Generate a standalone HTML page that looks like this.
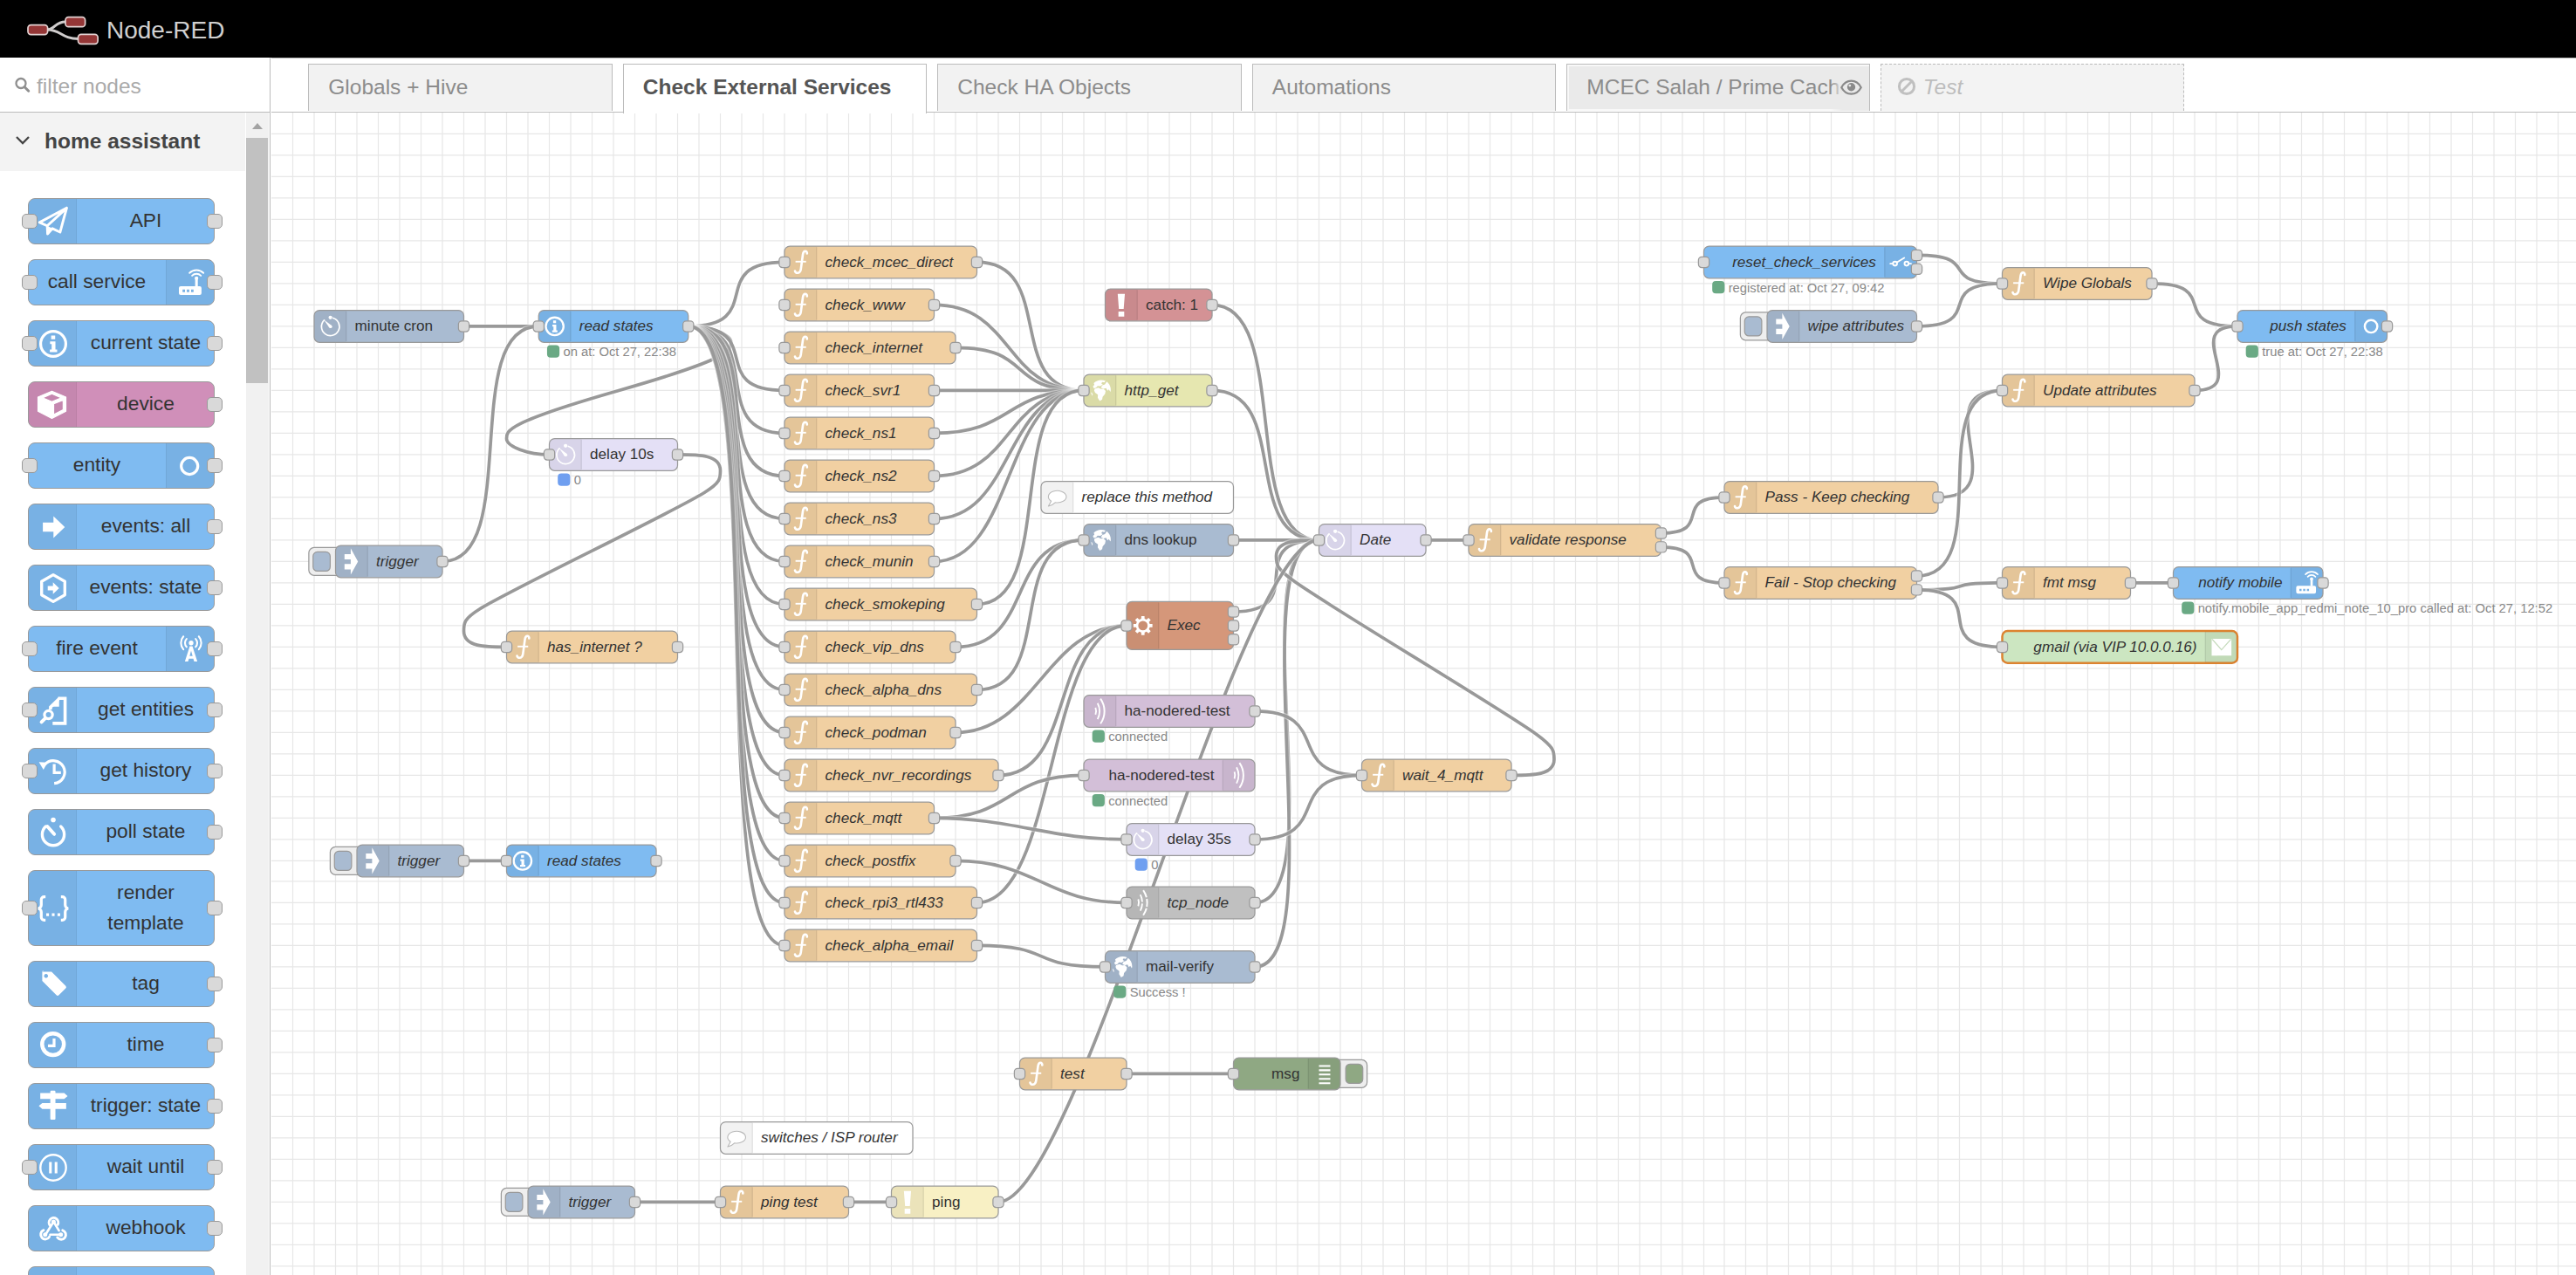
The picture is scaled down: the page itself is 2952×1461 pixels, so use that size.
<!DOCTYPE html>
<html lang="en"><head><meta charset="utf-8"><title>Node-RED</title><style>
html,body{margin:0;padding:0}
body{width:2952px;height:1461px;overflow:hidden;position:relative;background:#fff;font-family:"Liberation Sans", sans-serif;color:#333}
#hdr{position:absolute;left:0;top:0;width:2952px;height:66px;background:#000}
#hdr span{position:absolute;left:122px;top:18.500px;font-size:28px;line-height:32px;color:#cfcfcf}
#pal{position:absolute;left:0;top:66px;width:310px;height:1395px;background:#fff;border-right:1.5px solid #bbb;box-sizing:border-box;overflow:hidden}
#psearch{position:absolute;left:0;top:0;width:310px;height:63px;border-bottom:1.5px solid #bbb;box-sizing:border-box}
#psearch span{position:absolute;left:42px;top:18px;font-size:24.500px;line-height:30px;color:#aaa}
#pcat{position:absolute;left:0;top:63px;width:281px;height:67px;background:#f3f3f3}
#pcat span{position:absolute;left:51px;top:18px;font-size:24.500px;line-height:30px;font-weight:bold;color:#444}
.pn{position:absolute;left:32px;width:212px;border:1px solid #999;border-radius:8px;box-sizing:content-box}
.pi{position:absolute;top:0;bottom:0;width:54px;background:rgba(0,0,0,.05)}
.pi svg{position:absolute;left:6.500px;top:50%;margin-top:-21px}
.pl{font-size:22.750px;line-height:35px;margin-top:7px;margin-bottom:7px;text-align:center;color:#333;white-space:nowrap}
.pp{position:absolute;width:15.500px;height:15.500px;border:1px solid #999;border-radius:5px;background:#d9d9d9}
#sb{position:absolute;left:282px;top:63px;width:26px;height:1332px;background:#f1f1f1}
#sbt{position:absolute;left:0;top:29px;width:25px;height:281px;background:#c1c1c1}
#tabs{position:absolute;left:311px;top:66px;width:2641px;height:61px;background:#fff;border-top:1.5px solid #bbb;border-bottom:1.5px solid #bbb;box-sizing:content-box}
.tab{position:absolute;top:5.800px;width:346.300px;height:53.700px;border:1.500px solid #bbb;border-bottom:none;background:#f2f2f2;font-size:24.500px;line-height:51.400px;color:#8c8c8c;white-space:nowrap;overflow:hidden;box-sizing:content-box}
.tab.act{background:#fff;color:#555;font-weight:bold;height:56px}
.tab.hov{background:#eaeaea;box-shadow:inset 0 0 0 2px #f8f8f8}
.tab.dis{border-style:dashed;border-bottom-style:none;font-style:italic;color:#bdbdbd;background:#f3f3f3}
.tab>span,.tab{padding-left:0}
.tab{text-indent:22px}
.tab span{text-indent:0;display:inline-block}
.fade{position:absolute;right:0;top:2px;bottom:0;width:44px;background:linear-gradient(to right,rgba(234,234,234,0),#eaeaea 30%)}
.p{fill:#d9d9d9;stroke:#999}
.lo{fill:none;stroke:#fff;stroke-opacity:.4;stroke-width:5}
.ll{fill:none;stroke:#999;stroke-width:3}
.st{font-size:12.050px;fill:#888}
</style></head>
<body>
<svg style="position:absolute;left:0;top:0" width="2952" height="1461" viewBox="0 0 2952 1461">
<defs><clipPath id="cc"><rect x="310.2" y="128.9" width="2642" height="1332.1"/></clipPath></defs>
<g clip-path="url(#cc)"><g transform="translate(311,128.9) scale(1.225,1.225)" font-family='&quot;Liberation Sans&quot;, sans-serif' font-size="14" fill="#333">
<path d="M20 0V1088.05M40 0V1088.05M60 0V1088.05M80 0V1088.05M100 0V1088.05M120 0V1088.05M140 0V1088.05M160 0V1088.05M180 0V1088.05M200 0V1088.05M220 0V1088.05M240 0V1088.05M260 0V1088.05M280 0V1088.05M300 0V1088.05M320 0V1088.05M340 0V1088.05M360 0V1088.05M380 0V1088.05M400 0V1088.05M420 0V1088.05M440 0V1088.05M460 0V1088.05M480 0V1088.05M500 0V1088.05M520 0V1088.05M540 0V1088.05M560 0V1088.05M580 0V1088.05M600 0V1088.05M620 0V1088.05M640 0V1088.05M660 0V1088.05M680 0V1088.05M700 0V1088.05M720 0V1088.05M740 0V1088.05M760 0V1088.05M780 0V1088.05M800 0V1088.05M820 0V1088.05M840 0V1088.05M860 0V1088.05M880 0V1088.05M900 0V1088.05M920 0V1088.05M940 0V1088.05M960 0V1088.05M980 0V1088.05M1000 0V1088.05M1020 0V1088.05M1040 0V1088.05M1060 0V1088.05M1080 0V1088.05M1100 0V1088.05M1120 0V1088.05M1140 0V1088.05M1160 0V1088.05M1180 0V1088.05M1200 0V1088.05M1220 0V1088.05M1240 0V1088.05M1260 0V1088.05M1280 0V1088.05M1300 0V1088.05M1320 0V1088.05M1340 0V1088.05M1359.18 0V1088.05M1379.18 0V1088.05M1399.18 0V1088.05M1419.18 0V1088.05M1439.18 0V1088.05M1459.18 0V1088.05M1479.18 0V1088.05M1499.18 0V1088.05M1519.18 0V1088.05M1539.18 0V1088.05M1559.18 0V1088.05M1579.18 0V1088.05M1599.18 0V1088.05M1619.18 0V1088.05M1639.18 0V1088.05M1659.18 0V1088.05M1679.18 0V1088.05M1699.18 0V1088.05M1719.18 0V1088.05M1739.18 0V1088.05M1759.18 0V1088.05M1779.18 0V1088.05M1799.18 0V1088.05M1819.18 0V1088.05M1839.18 0V1088.05M1859.18 0V1088.05M1879.18 0V1088.05M1899.18 0V1088.05M1919.18 0V1088.05M1939.18 0V1088.05M1959.18 0V1088.05M1979.18 0V1088.05M1999.18 0V1088.05M2019.18 0V1088.05M2039.18 0V1088.05M2059.18 0V1088.05M2079.18 0V1088.05M2099.18 0V1088.05M2119.18 0V1088.05M2139.18 0V1088.05M0 20H2157.15M0 40H2157.15M0 60H2157.15M0 80H2157.15M0 100H2157.15M0 120H2157.15M0 140H2157.15M0 160H2157.15M0 180H2157.15M0 200H2157.15M0 220H2157.15M0 240H2157.15M0 260H2157.15M0 280H2157.15M0 300H2157.15M0 320H2157.15M0 340H2157.15M0 360H2157.15M0 380H2157.15M0 400H2157.15M0 420H2157.15M0 440H2157.15M0 460H2157.15M0 480H2157.15M0 500H2157.15M0 520H2157.15M0 540H2157.15M0 560H2157.15M0 580H2157.15M0 600H2157.15M0 620H2157.15M0 640H2157.15M0 660H2157.15M0 680H2157.15M0 700H2157.15M0 719.18H2157.15M0 739.18H2157.15M0 759.18H2157.15M0 779.18H2157.15M0 799.18H2157.15M0 819.18H2157.15M0 839.18H2157.15M0 859.18H2157.15M0 879.18H2157.15M0 899.18H2157.15M0 919.18H2157.15M0 939.18H2157.15M0 959.18H2157.15M0 979.18H2157.15M0 999.18H2157.15M0 1019.18H2157.15M0 1039.18H2157.15M0 1059.18H2157.15M0 1079.18H2157.15" stroke="#e7e7e7" stroke-width="1" fill="none"/>
<path d="M 180 200 C 232.5 200 197.5 200 250 200" class="lo"/><path d="M 180 200 C 232.5 200 197.5 200 250 200" class="ll"/>
<path d="M 160 420 C 235 420 175 200 250 200" class="lo"/><path d="M 160 420 C 235 420 175 200 250 200" class="ll"/>
<path d="M 390 200 C 410 200 430 207.5 430 215 S 430 230 325 260 S 220 297.5 220 305 S 240 320 260 320" class="lo"/><path d="M 390 200 C 410 200 430 207.5 430 215 S 430 230 325 260 S 220 297.5 220 305 S 240 320 260 320" class="ll"/>
<path d="M 390 200 C 465 200 405 140 480 140" class="lo"/><path d="M 390 200 C 465 200 405 140 480 140" class="ll"/>
<path d="M 390 200 C 465 200 405 300 480 300" class="lo"/><path d="M 390 200 C 465 200 405 300 480 300" class="ll"/>
<path d="M 390 200 C 465 200 405 380 480 380" class="lo"/><path d="M 390 200 C 465 200 405 380 480 380" class="ll"/>
<path d="M 390 200 C 465 200 405 460 480 460" class="lo"/><path d="M 390 200 C 465 200 405 460 480 460" class="ll"/>
<path d="M 390 200 C 465 200 405 540 480 540" class="lo"/><path d="M 390 200 C 465 200 405 540 480 540" class="ll"/>
<path d="M 390 200 C 465 200 405 620 480 620" class="lo"/><path d="M 390 200 C 465 200 405 620 480 620" class="ll"/>
<path d="M 390 200 C 465 200 405 700 480 700" class="lo"/><path d="M 390 200 C 465 200 405 700 480 700" class="ll"/>
<path d="M 390 200 C 465 200 405 779.18 480 779.18" class="lo"/><path d="M 390 200 C 465 200 405 779.18 480 779.18" class="ll"/>
<path d="M 390 200 C 465 200 405 260 480 260" class="lo"/><path d="M 390 200 C 465 200 405 260 480 260" class="ll"/>
<path d="M 390 200 C 465 200 405 340 480 340" class="lo"/><path d="M 390 200 C 465 200 405 340 480 340" class="ll"/>
<path d="M 390 200 C 465 200 405 420 480 420" class="lo"/><path d="M 390 200 C 465 200 405 420 480 420" class="ll"/>
<path d="M 390 200 C 465 200 405 500 480 500" class="lo"/><path d="M 390 200 C 465 200 405 500 480 500" class="ll"/>
<path d="M 390 200 C 465 200 405 580 480 580" class="lo"/><path d="M 390 200 C 465 200 405 580 480 580" class="ll"/>
<path d="M 390 200 C 465 200 405 660 480 660" class="lo"/><path d="M 390 200 C 465 200 405 660 480 660" class="ll"/>
<path d="M 390 200 C 465 200 405 739.18 480 739.18" class="lo"/><path d="M 390 200 C 465 200 405 739.18 480 739.18" class="ll"/>
<path d="M 380 320 C 400 320 420 320 420 335 S 420 350 300 410 S 180 470 180 485 S 200 500 220 500" class="lo"/><path d="M 380 320 C 400 320 420 320 420 335 S 420 350 300 410 S 180 470 180 485 S 200 500 220 500" class="ll"/>
<path d="M 660 140 C 735 140 685 260 760 260" class="lo"/><path d="M 660 140 C 735 140 685 260 760 260" class="ll"/>
<path d="M 620 180 C 695 180 685 260 760 260" class="lo"/><path d="M 620 180 C 695 180 685 260 760 260" class="ll"/>
<path d="M 640 220 C 715 220 685 260 760 260" class="lo"/><path d="M 640 220 C 715 220 685 260 760 260" class="ll"/>
<path d="M 620 260 C 695 260 685 260 760 260" class="lo"/><path d="M 620 260 C 695 260 685 260 760 260" class="ll"/>
<path d="M 620 300 C 695 300 685 260 760 260" class="lo"/><path d="M 620 300 C 695 300 685 260 760 260" class="ll"/>
<path d="M 620 340 C 695 340 685 260 760 260" class="lo"/><path d="M 620 340 C 695 340 685 260 760 260" class="ll"/>
<path d="M 620 380 C 695 380 685 260 760 260" class="lo"/><path d="M 620 380 C 695 380 685 260 760 260" class="ll"/>
<path d="M 620 420 C 695 420 685 260 760 260" class="lo"/><path d="M 620 420 C 695 420 685 260 760 260" class="ll"/>
<path d="M 660 460 C 735 460 685 260 760 260" class="lo"/><path d="M 660 460 C 735 460 685 260 760 260" class="ll"/>
<path d="M 640 500 C 715 500 685 400 760 400" class="lo"/><path d="M 640 500 C 715 500 685 400 760 400" class="ll"/>
<path d="M 660 540 C 735 540 685 400 760 400" class="lo"/><path d="M 660 540 C 735 540 685 400 760 400" class="ll"/>
<path d="M 640 580 C 715 580 725 480 800 480" class="lo"/><path d="M 640 580 C 715 580 725 480 800 480" class="ll"/>
<path d="M 680 620 C 755 620 725 480 800 480" class="lo"/><path d="M 680 620 C 755 620 725 480 800 480" class="ll"/>
<path d="M 660 739.18 C 735 739.18 725 480 800 480" class="lo"/><path d="M 660 739.18 C 735 739.18 725 480 800 480" class="ll"/>
<path d="M 620 660 C 695 660 685 620 760 620" class="lo"/><path d="M 620 660 C 695 660 685 620 760 620" class="ll"/>
<path d="M 620 660 C 695 660 725 680 800 680" class="lo"/><path d="M 620 660 C 695 660 725 680 800 680" class="ll"/>
<path d="M 640 700 C 715 700 725 739.18 800 739.18" class="lo"/><path d="M 640 700 C 715 700 725 739.18 800 739.18" class="ll"/>
<path d="M 660 779.18 C 735 779.18 705 799.18 780 799.18" class="lo"/><path d="M 660 779.18 C 735 779.18 705 799.18 780 799.18" class="ll"/>
<path d="M 880 180 C 955 180 905 400 980 400" class="lo"/><path d="M 880 180 C 955 180 905 400 980 400" class="ll"/>
<path d="M 880 260 C 955 260 905 400 980 400" class="lo"/><path d="M 880 260 C 955 260 905 400 980 400" class="ll"/>
<path d="M 900 400 C 960 400 920 400 980 400" class="lo"/><path d="M 900 400 C 960 400 920 400 980 400" class="ll"/>
<path d="M 900 467 C 975 467 905 400 980 400" class="lo"/><path d="M 900 467 C 975 467 905 400 980 400" class="ll"/>
<path d="M 920 739.18 C 995 739.18 905 400 980 400" class="lo"/><path d="M 920 739.18 C 995 739.18 905 400 980 400" class="ll"/>
<path d="M 920 799.18 C 995 799.18 905 400 980 400" class="lo"/><path d="M 920 799.18 C 995 799.18 905 400 980 400" class="ll"/>
<path d="M 1160 620 C 1180 620 1200 620 1200 605 S 1200 590 1070 510 S 940 430 940 415 S 960 400 980 400" class="lo"/><path d="M 1160 620 C 1180 620 1200 620 1200 605 S 1200 590 1070 510 S 940 430 940 415 S 960 400 980 400" class="ll"/>
<path d="M 680 1019.18 C 755 1019.18 905 400 980 400" class="lo"/><path d="M 680 1019.18 C 755 1019.18 905 400 980 400" class="ll"/>
<path d="M 920 560 C 995 560 945 620 1020 620" class="lo"/><path d="M 920 560 C 995 560 945 620 1020 620" class="ll"/>
<path d="M 920 680 C 995 680 945 620 1020 620" class="lo"/><path d="M 920 680 C 995 680 945 620 1020 620" class="ll"/>
<path d="M 1080 400 C 1110 400 1090 400 1120 400" class="lo"/><path d="M 1080 400 C 1110 400 1090 400 1120 400" class="ll"/>
<path d="M 1300 393.5 C 1350.72 393.5 1308.46 360 1359.18 360" class="lo"/><path d="M 1300 393.5 C 1350.72 393.5 1308.46 360 1359.18 360" class="ll"/>
<path d="M 1300 406.5 C 1350.72 406.5 1308.46 440 1359.18 440" class="lo"/><path d="M 1300 406.5 C 1350.72 406.5 1308.46 440 1359.18 440" class="ll"/>
<path d="M 1559.18 360 C 1634.18 360 1544.18 260 1619.18 260" class="lo"/><path d="M 1559.18 360 C 1634.18 360 1544.18 260 1619.18 260" class="ll"/>
<path d="M 1539.18 433.5 C 1614.18 433.5 1544.18 260 1619.18 260" class="lo"/><path d="M 1539.18 433.5 C 1614.18 433.5 1544.18 260 1619.18 260" class="ll"/>
<path d="M 1539.18 446.5 C 1599.38 446.5 1558.99 440 1619.18 440" class="lo"/><path d="M 1539.18 446.5 C 1599.38 446.5 1558.99 440 1619.18 440" class="ll"/>
<path d="M 1539.18 446.5 C 1611.36 446.5 1547 500 1619.18 500" class="lo"/><path d="M 1539.18 446.5 C 1611.36 446.5 1547 500 1619.18 500" class="ll"/>
<path d="M 1739.18 440 C 1769.18 440 1749.18 440 1779.18 440" class="lo"/><path d="M 1739.18 440 C 1769.18 440 1749.18 440 1779.18 440" class="ll"/>
<path d="M 1539.18 133.5 C 1602.39 133.5 1555.98 160 1619.18 160" class="lo"/><path d="M 1539.18 133.5 C 1602.39 133.5 1555.98 160 1619.18 160" class="ll"/>
<path d="M 1539.18 200 C 1606.27 200 1552.1 160 1619.18 160" class="lo"/><path d="M 1539.18 200 C 1606.27 200 1552.1 160 1619.18 160" class="ll"/>
<path d="M 1759.18 160 C 1826.27 160 1772.1 200 1839.18 200" class="lo"/><path d="M 1759.18 160 C 1826.27 160 1772.1 200 1839.18 200" class="ll"/>
<path d="M 1799.18 260 C 1853.27 260 1785.1 200 1839.18 200" class="lo"/><path d="M 1799.18 260 C 1853.27 260 1785.1 200 1839.18 200" class="ll"/>
<path d="M 180 700 C 210 700 190 700 220 700" class="lo"/><path d="M 180 700 C 210 700 190 700 220 700" class="ll"/>
<path d="M 340 1019.18 C 400 1019.18 360 1019.18 420 1019.18" class="lo"/><path d="M 340 1019.18 C 400 1019.18 360 1019.18 420 1019.18" class="ll"/>
<path d="M 540 1019.18 C 570 1019.18 550 1019.18 580 1019.18" class="lo"/><path d="M 540 1019.18 C 570 1019.18 550 1019.18 580 1019.18" class="ll"/>
<path d="M 800 899.18 C 875 899.18 825 899.18 900 899.18" class="lo"/><path d="M 800 899.18 C 875 899.18 825 899.18 900 899.18" class="ll"/>
<g transform="translate(40,185)"><rect width="140" height="30" rx="5" fill="#a9bbd1" stroke="#999"/><path d="M5 .5 h25 v29 h-25 a4.5 4.5 0 0 1 -4.5 -4.5 v-20 a4.5 4.5 0 0 1 4.5 -4.5z" fill="#000" fill-opacity=".05"/><path d="M30 1v28" stroke="#000" stroke-opacity=".1" fill="none"/><g transform="translate(0,0)"><path d="M17.800 7.300A8.400 8.400 0 1 1 9.400 9.300" fill="none" stroke="#fff" stroke-width="1.400" stroke-linecap="round"/><circle cx="15.300" cy="15.300" r="1.500" fill="#fff"/><circle cx="15.200" cy="6.800" r="1.750" fill="#fff"/><path d="M14.100 16.200L9 8.700l7.300 5.600z" fill="#fff"/></g><text x="38" y="19.3">minute cron</text><rect class="p" x="135" y="10" width="10" height="10" rx="3"/></g>
<g transform="translate(250,185)"><rect width="140" height="30" rx="5" fill="#7fbbf1" stroke="#999"/><path d="M5 .5 h25 v29 h-25 a4.5 4.5 0 0 1 -4.5 -4.5 v-20 a4.5 4.5 0 0 1 4.5 -4.5z" fill="#000" fill-opacity=".05"/><path d="M30 1v28" stroke="#000" stroke-opacity=".1" fill="none"/><g transform="translate(0,0)"><circle cx="15" cy="15" r="8.300" fill="none" stroke="#fff" stroke-width="1.900"/><path d="M13.600 9.600h2.700v2.500h-2.700zM12.900 13.500h3.600v5.300h1.100v1.700h-4.900v-1.700h1.200v-3.600h-1z" fill="#fff"/></g><text x="38" y="19.3" font-style="italic">read states</text><rect class="p" x="-5" y="10" width="10" height="10" rx="3"/><rect class="p" x="135" y="10" width="10" height="10" rx="3"/><rect x="9.200" y="33.9" width="9" height="9" rx="2" fill="#6aa984" stroke="#6aa984" stroke-width="2.600"/><text class="st" x="23" y="43">on at: Oct 27, 22:38</text></g>
<g transform="translate(480,125)"><rect width="180" height="30" rx="5" fill="#f1d0a2" stroke="#999"/><path d="M5 .5 h25 v29 h-25 a4.5 4.5 0 0 1 -4.5 -4.5 v-20 a4.5 4.5 0 0 1 4.5 -4.5z" fill="#000" fill-opacity=".05"/><path d="M30 1v28" stroke="#000" stroke-opacity=".1" fill="none"/><g transform="translate(0,0)"><g fill="none" stroke="#fff" stroke-linecap="round"><path d="M21.100 6.900C21.300 4.100 17.800 3.500 17.200 7.700L15.300 21.700C14.700 25.900 10.200 25.900 9.800 23.300" stroke-width="2.150"/><path d="M10.300 14.500H20.200" stroke-width="1.550" stroke-linecap="butt"/></g></g><text x="38" y="19.3" font-style="italic">check_mcec_direct</text><rect class="p" x="-5" y="10" width="10" height="10" rx="3"/><rect class="p" x="175" y="10" width="10" height="10" rx="3"/></g>
<g transform="translate(480,165)"><rect width="140" height="30" rx="5" fill="#f1d0a2" stroke="#999"/><path d="M5 .5 h25 v29 h-25 a4.5 4.5 0 0 1 -4.5 -4.5 v-20 a4.5 4.5 0 0 1 4.5 -4.5z" fill="#000" fill-opacity=".05"/><path d="M30 1v28" stroke="#000" stroke-opacity=".1" fill="none"/><g transform="translate(0,0)"><g fill="none" stroke="#fff" stroke-linecap="round"><path d="M21.100 6.900C21.300 4.100 17.800 3.500 17.200 7.700L15.300 21.700C14.700 25.900 10.200 25.900 9.800 23.300" stroke-width="2.150"/><path d="M10.300 14.500H20.200" stroke-width="1.550" stroke-linecap="butt"/></g></g><text x="38" y="19.3" font-style="italic">check_www</text><rect class="p" x="-5" y="10" width="10" height="10" rx="3"/><rect class="p" x="135" y="10" width="10" height="10" rx="3"/></g>
<g transform="translate(480,205)"><rect width="160" height="30" rx="5" fill="#f1d0a2" stroke="#999"/><path d="M5 .5 h25 v29 h-25 a4.5 4.5 0 0 1 -4.5 -4.5 v-20 a4.5 4.5 0 0 1 4.5 -4.5z" fill="#000" fill-opacity=".05"/><path d="M30 1v28" stroke="#000" stroke-opacity=".1" fill="none"/><g transform="translate(0,0)"><g fill="none" stroke="#fff" stroke-linecap="round"><path d="M21.100 6.900C21.300 4.100 17.800 3.500 17.200 7.700L15.300 21.700C14.700 25.900 10.200 25.900 9.800 23.300" stroke-width="2.150"/><path d="M10.300 14.500H20.200" stroke-width="1.550" stroke-linecap="butt"/></g></g><text x="38" y="19.3" font-style="italic">check_internet</text><rect class="p" x="-5" y="10" width="10" height="10" rx="3"/><rect class="p" x="155" y="10" width="10" height="10" rx="3"/></g>
<g transform="translate(480,245)"><rect width="140" height="30" rx="5" fill="#f1d0a2" stroke="#999"/><path d="M5 .5 h25 v29 h-25 a4.5 4.5 0 0 1 -4.5 -4.5 v-20 a4.5 4.5 0 0 1 4.5 -4.5z" fill="#000" fill-opacity=".05"/><path d="M30 1v28" stroke="#000" stroke-opacity=".1" fill="none"/><g transform="translate(0,0)"><g fill="none" stroke="#fff" stroke-linecap="round"><path d="M21.100 6.900C21.300 4.100 17.800 3.500 17.200 7.700L15.300 21.700C14.700 25.900 10.200 25.900 9.800 23.300" stroke-width="2.150"/><path d="M10.300 14.500H20.200" stroke-width="1.550" stroke-linecap="butt"/></g></g><text x="38" y="19.3" font-style="italic">check_svr1</text><rect class="p" x="-5" y="10" width="10" height="10" rx="3"/><rect class="p" x="135" y="10" width="10" height="10" rx="3"/></g>
<g transform="translate(480,285)"><rect width="140" height="30" rx="5" fill="#f1d0a2" stroke="#999"/><path d="M5 .5 h25 v29 h-25 a4.5 4.5 0 0 1 -4.5 -4.5 v-20 a4.5 4.5 0 0 1 4.5 -4.5z" fill="#000" fill-opacity=".05"/><path d="M30 1v28" stroke="#000" stroke-opacity=".1" fill="none"/><g transform="translate(0,0)"><g fill="none" stroke="#fff" stroke-linecap="round"><path d="M21.100 6.900C21.300 4.100 17.800 3.500 17.200 7.700L15.300 21.700C14.700 25.900 10.200 25.900 9.800 23.300" stroke-width="2.150"/><path d="M10.300 14.500H20.200" stroke-width="1.550" stroke-linecap="butt"/></g></g><text x="38" y="19.3" font-style="italic">check_ns1</text><rect class="p" x="-5" y="10" width="10" height="10" rx="3"/><rect class="p" x="135" y="10" width="10" height="10" rx="3"/></g>
<g transform="translate(480,325)"><rect width="140" height="30" rx="5" fill="#f1d0a2" stroke="#999"/><path d="M5 .5 h25 v29 h-25 a4.5 4.5 0 0 1 -4.5 -4.5 v-20 a4.5 4.5 0 0 1 4.5 -4.5z" fill="#000" fill-opacity=".05"/><path d="M30 1v28" stroke="#000" stroke-opacity=".1" fill="none"/><g transform="translate(0,0)"><g fill="none" stroke="#fff" stroke-linecap="round"><path d="M21.100 6.900C21.300 4.100 17.800 3.500 17.200 7.700L15.300 21.700C14.700 25.900 10.200 25.900 9.800 23.300" stroke-width="2.150"/><path d="M10.300 14.500H20.200" stroke-width="1.550" stroke-linecap="butt"/></g></g><text x="38" y="19.3" font-style="italic">check_ns2</text><rect class="p" x="-5" y="10" width="10" height="10" rx="3"/><rect class="p" x="135" y="10" width="10" height="10" rx="3"/></g>
<g transform="translate(480,365)"><rect width="140" height="30" rx="5" fill="#f1d0a2" stroke="#999"/><path d="M5 .5 h25 v29 h-25 a4.5 4.5 0 0 1 -4.5 -4.5 v-20 a4.5 4.5 0 0 1 4.5 -4.5z" fill="#000" fill-opacity=".05"/><path d="M30 1v28" stroke="#000" stroke-opacity=".1" fill="none"/><g transform="translate(0,0)"><g fill="none" stroke="#fff" stroke-linecap="round"><path d="M21.100 6.900C21.300 4.100 17.800 3.500 17.200 7.700L15.300 21.700C14.700 25.900 10.200 25.900 9.800 23.300" stroke-width="2.150"/><path d="M10.300 14.500H20.200" stroke-width="1.550" stroke-linecap="butt"/></g></g><text x="38" y="19.3" font-style="italic">check_ns3</text><rect class="p" x="-5" y="10" width="10" height="10" rx="3"/><rect class="p" x="135" y="10" width="10" height="10" rx="3"/></g>
<g transform="translate(480,405)"><rect width="140" height="30" rx="5" fill="#f1d0a2" stroke="#999"/><path d="M5 .5 h25 v29 h-25 a4.5 4.5 0 0 1 -4.5 -4.5 v-20 a4.5 4.5 0 0 1 4.5 -4.5z" fill="#000" fill-opacity=".05"/><path d="M30 1v28" stroke="#000" stroke-opacity=".1" fill="none"/><g transform="translate(0,0)"><g fill="none" stroke="#fff" stroke-linecap="round"><path d="M21.100 6.900C21.300 4.100 17.800 3.500 17.200 7.700L15.300 21.700C14.700 25.900 10.200 25.900 9.800 23.300" stroke-width="2.150"/><path d="M10.300 14.500H20.200" stroke-width="1.550" stroke-linecap="butt"/></g></g><text x="38" y="19.3" font-style="italic">check_munin</text><rect class="p" x="-5" y="10" width="10" height="10" rx="3"/><rect class="p" x="135" y="10" width="10" height="10" rx="3"/></g>
<g transform="translate(480,445)"><rect width="180" height="30" rx="5" fill="#f1d0a2" stroke="#999"/><path d="M5 .5 h25 v29 h-25 a4.5 4.5 0 0 1 -4.5 -4.5 v-20 a4.5 4.5 0 0 1 4.5 -4.5z" fill="#000" fill-opacity=".05"/><path d="M30 1v28" stroke="#000" stroke-opacity=".1" fill="none"/><g transform="translate(0,0)"><g fill="none" stroke="#fff" stroke-linecap="round"><path d="M21.100 6.900C21.300 4.100 17.800 3.500 17.200 7.700L15.300 21.700C14.700 25.900 10.200 25.900 9.800 23.300" stroke-width="2.150"/><path d="M10.300 14.500H20.200" stroke-width="1.550" stroke-linecap="butt"/></g></g><text x="38" y="19.3" font-style="italic">check_smokeping</text><rect class="p" x="-5" y="10" width="10" height="10" rx="3"/><rect class="p" x="175" y="10" width="10" height="10" rx="3"/></g>
<g transform="translate(480,485)"><rect width="160" height="30" rx="5" fill="#f1d0a2" stroke="#999"/><path d="M5 .5 h25 v29 h-25 a4.5 4.5 0 0 1 -4.5 -4.5 v-20 a4.5 4.5 0 0 1 4.5 -4.5z" fill="#000" fill-opacity=".05"/><path d="M30 1v28" stroke="#000" stroke-opacity=".1" fill="none"/><g transform="translate(0,0)"><g fill="none" stroke="#fff" stroke-linecap="round"><path d="M21.100 6.900C21.300 4.100 17.800 3.500 17.200 7.700L15.300 21.700C14.700 25.900 10.200 25.900 9.800 23.300" stroke-width="2.150"/><path d="M10.300 14.500H20.200" stroke-width="1.550" stroke-linecap="butt"/></g></g><text x="38" y="19.3" font-style="italic">check_vip_dns</text><rect class="p" x="-5" y="10" width="10" height="10" rx="3"/><rect class="p" x="155" y="10" width="10" height="10" rx="3"/></g>
<g transform="translate(480,525)"><rect width="180" height="30" rx="5" fill="#f1d0a2" stroke="#999"/><path d="M5 .5 h25 v29 h-25 a4.5 4.5 0 0 1 -4.5 -4.5 v-20 a4.5 4.5 0 0 1 4.5 -4.5z" fill="#000" fill-opacity=".05"/><path d="M30 1v28" stroke="#000" stroke-opacity=".1" fill="none"/><g transform="translate(0,0)"><g fill="none" stroke="#fff" stroke-linecap="round"><path d="M21.100 6.900C21.300 4.100 17.800 3.500 17.200 7.700L15.300 21.700C14.700 25.900 10.200 25.900 9.800 23.300" stroke-width="2.150"/><path d="M10.300 14.500H20.200" stroke-width="1.550" stroke-linecap="butt"/></g></g><text x="38" y="19.3" font-style="italic">check_alpha_dns</text><rect class="p" x="-5" y="10" width="10" height="10" rx="3"/><rect class="p" x="175" y="10" width="10" height="10" rx="3"/></g>
<g transform="translate(480,565)"><rect width="160" height="30" rx="5" fill="#f1d0a2" stroke="#999"/><path d="M5 .5 h25 v29 h-25 a4.5 4.5 0 0 1 -4.5 -4.5 v-20 a4.5 4.5 0 0 1 4.5 -4.5z" fill="#000" fill-opacity=".05"/><path d="M30 1v28" stroke="#000" stroke-opacity=".1" fill="none"/><g transform="translate(0,0)"><g fill="none" stroke="#fff" stroke-linecap="round"><path d="M21.100 6.900C21.300 4.100 17.800 3.500 17.200 7.700L15.300 21.700C14.700 25.900 10.200 25.900 9.800 23.300" stroke-width="2.150"/><path d="M10.300 14.500H20.200" stroke-width="1.550" stroke-linecap="butt"/></g></g><text x="38" y="19.3" font-style="italic">check_podman</text><rect class="p" x="-5" y="10" width="10" height="10" rx="3"/><rect class="p" x="155" y="10" width="10" height="10" rx="3"/></g>
<g transform="translate(480,605)"><rect width="200" height="30" rx="5" fill="#f1d0a2" stroke="#999"/><path d="M5 .5 h25 v29 h-25 a4.5 4.5 0 0 1 -4.5 -4.5 v-20 a4.5 4.5 0 0 1 4.5 -4.5z" fill="#000" fill-opacity=".05"/><path d="M30 1v28" stroke="#000" stroke-opacity=".1" fill="none"/><g transform="translate(0,0)"><g fill="none" stroke="#fff" stroke-linecap="round"><path d="M21.100 6.900C21.300 4.100 17.800 3.500 17.200 7.700L15.300 21.700C14.700 25.900 10.200 25.900 9.800 23.300" stroke-width="2.150"/><path d="M10.300 14.500H20.200" stroke-width="1.550" stroke-linecap="butt"/></g></g><text x="38" y="19.3" font-style="italic">check_nvr_recordings</text><rect class="p" x="-5" y="10" width="10" height="10" rx="3"/><rect class="p" x="195" y="10" width="10" height="10" rx="3"/></g>
<g transform="translate(480,645)"><rect width="140" height="30" rx="5" fill="#f1d0a2" stroke="#999"/><path d="M5 .5 h25 v29 h-25 a4.5 4.5 0 0 1 -4.5 -4.5 v-20 a4.5 4.5 0 0 1 4.5 -4.5z" fill="#000" fill-opacity=".05"/><path d="M30 1v28" stroke="#000" stroke-opacity=".1" fill="none"/><g transform="translate(0,0)"><g fill="none" stroke="#fff" stroke-linecap="round"><path d="M21.100 6.900C21.300 4.100 17.800 3.500 17.200 7.700L15.300 21.700C14.700 25.900 10.200 25.900 9.800 23.300" stroke-width="2.150"/><path d="M10.300 14.500H20.200" stroke-width="1.550" stroke-linecap="butt"/></g></g><text x="38" y="19.3" font-style="italic">check_mqtt</text><rect class="p" x="-5" y="10" width="10" height="10" rx="3"/><rect class="p" x="135" y="10" width="10" height="10" rx="3"/></g>
<g transform="translate(480,685)"><rect width="160" height="30" rx="5" fill="#f1d0a2" stroke="#999"/><path d="M5 .5 h25 v29 h-25 a4.5 4.5 0 0 1 -4.5 -4.5 v-20 a4.5 4.5 0 0 1 4.5 -4.5z" fill="#000" fill-opacity=".05"/><path d="M30 1v28" stroke="#000" stroke-opacity=".1" fill="none"/><g transform="translate(0,0)"><g fill="none" stroke="#fff" stroke-linecap="round"><path d="M21.100 6.900C21.300 4.100 17.800 3.500 17.200 7.700L15.300 21.700C14.700 25.900 10.200 25.900 9.800 23.300" stroke-width="2.150"/><path d="M10.300 14.500H20.200" stroke-width="1.550" stroke-linecap="butt"/></g></g><text x="38" y="19.3" font-style="italic">check_postfix</text><rect class="p" x="-5" y="10" width="10" height="10" rx="3"/><rect class="p" x="155" y="10" width="10" height="10" rx="3"/></g>
<g transform="translate(480,724.18)"><rect width="180" height="30" rx="5" fill="#f1d0a2" stroke="#999"/><path d="M5 .5 h25 v29 h-25 a4.5 4.5 0 0 1 -4.5 -4.5 v-20 a4.5 4.5 0 0 1 4.5 -4.5z" fill="#000" fill-opacity=".05"/><path d="M30 1v28" stroke="#000" stroke-opacity=".1" fill="none"/><g transform="translate(0,0)"><g fill="none" stroke="#fff" stroke-linecap="round"><path d="M21.100 6.900C21.300 4.100 17.800 3.500 17.200 7.700L15.300 21.700C14.700 25.900 10.200 25.900 9.800 23.300" stroke-width="2.150"/><path d="M10.300 14.500H20.200" stroke-width="1.550" stroke-linecap="butt"/></g></g><text x="38" y="19.3" font-style="italic">check_rpi3_rtl433</text><rect class="p" x="-5" y="10" width="10" height="10" rx="3"/><rect class="p" x="175" y="10" width="10" height="10" rx="3"/></g>
<g transform="translate(480,764.18)"><rect width="180" height="30" rx="5" fill="#f1d0a2" stroke="#999"/><path d="M5 .5 h25 v29 h-25 a4.5 4.5 0 0 1 -4.5 -4.5 v-20 a4.5 4.5 0 0 1 4.5 -4.5z" fill="#000" fill-opacity=".05"/><path d="M30 1v28" stroke="#000" stroke-opacity=".1" fill="none"/><g transform="translate(0,0)"><g fill="none" stroke="#fff" stroke-linecap="round"><path d="M21.100 6.900C21.300 4.100 17.800 3.500 17.200 7.700L15.300 21.700C14.700 25.900 10.200 25.900 9.800 23.300" stroke-width="2.150"/><path d="M10.300 14.500H20.200" stroke-width="1.550" stroke-linecap="butt"/></g></g><text x="38" y="19.3" font-style="italic">check_alpha_email</text><rect class="p" x="-5" y="10" width="10" height="10" rx="3"/><rect class="p" x="175" y="10" width="10" height="10" rx="3"/></g>
<g transform="translate(260,305)"><rect width="120" height="30" rx="5" fill="#e4e0f6" stroke="#999"/><path d="M5 .5 h25 v29 h-25 a4.5 4.5 0 0 1 -4.5 -4.5 v-20 a4.5 4.5 0 0 1 4.5 -4.5z" fill="#000" fill-opacity=".05"/><path d="M30 1v28" stroke="#000" stroke-opacity=".1" fill="none"/><g transform="translate(0,0)"><path d="M17.800 7.300A8.400 8.400 0 1 1 9.400 9.300" fill="none" stroke="#fff" stroke-width="1.400" stroke-linecap="round"/><circle cx="15.300" cy="15.300" r="1.500" fill="#fff"/><circle cx="15.200" cy="6.800" r="1.750" fill="#fff"/><path d="M14.100 16.200L9 8.700l7.300 5.600z" fill="#fff"/></g><text x="38" y="19.3">delay 10s</text><rect class="p" x="-5" y="10" width="10" height="10" rx="3"/><rect class="p" x="115" y="10" width="10" height="10" rx="3"/><rect x="9.200" y="33.9" width="9" height="9" rx="2" fill="#6f9ff0" stroke="#6f9ff0" stroke-width="2.600"/><text class="st" x="23" y="43">0</text></g>
<g transform="translate(60,405)"><rect x="-25" y="2" width="32" height="26" rx="5" fill="#eee" stroke="#999"/><rect x="-21" y="6" width="16" height="18" rx="4" fill="#a9bbd1" stroke="#999"/><rect width="100" height="30" rx="5" fill="#a9bbd1" stroke="#999"/><path d="M5 .5 h25 v29 h-25 a4.5 4.5 0 0 1 -4.5 -4.5 v-20 a4.5 4.5 0 0 1 4.5 -4.5z" fill="#000" fill-opacity=".05"/><path d="M30 1v28" stroke="#000" stroke-opacity=".1" fill="none"/><g transform="translate(0,0)"><path d="M8.400 8.100h6.200v5h-6.200zM8.400 17.400h6.200v5h-6.200zM14.200 2.700l6.800 12.300-6.800 12.300z" fill="#fff"/></g><text x="38" y="19.3" font-style="italic">trigger</text><rect class="p" x="95" y="10" width="10" height="10" rx="3"/></g>
<g transform="translate(220,485)"><rect width="160" height="30" rx="5" fill="#f1d0a2" stroke="#999"/><path d="M5 .5 h25 v29 h-25 a4.5 4.5 0 0 1 -4.5 -4.5 v-20 a4.5 4.5 0 0 1 4.5 -4.5z" fill="#000" fill-opacity=".05"/><path d="M30 1v28" stroke="#000" stroke-opacity=".1" fill="none"/><g transform="translate(0,0)"><g fill="none" stroke="#fff" stroke-linecap="round"><path d="M21.100 6.900C21.300 4.100 17.800 3.500 17.200 7.700L15.300 21.700C14.700 25.900 10.200 25.900 9.800 23.300" stroke-width="2.150"/><path d="M10.300 14.500H20.200" stroke-width="1.550" stroke-linecap="butt"/></g></g><text x="38" y="19.3" font-style="italic">has_internet ?</text><rect class="p" x="-5" y="10" width="10" height="10" rx="3"/><rect class="p" x="155" y="10" width="10" height="10" rx="3"/></g>
<g transform="translate(780,165)"><rect width="100" height="30" rx="5" fill="#d49295" stroke="#999"/><path d="M5 .5 h25 v29 h-25 a4.5 4.5 0 0 1 -4.5 -4.5 v-20 a4.5 4.5 0 0 1 4.5 -4.5z" fill="#000" fill-opacity=".05"/><path d="M30 1v28" stroke="#000" stroke-opacity=".1" fill="none"/><g transform="translate(0,0)"><path d="M11.700 4.600h6.700l-1.100 14.200h-4.500zM12.400 21.300h5.400v4.700h-5.400z" fill="#fff"/></g><text x="38" y="19.3">catch: 1</text><rect class="p" x="95" y="10" width="10" height="10" rx="3"/></g>
<g transform="translate(760,245)"><rect width="120" height="30" rx="5" fill="#e6e7b0" stroke="#999"/><path d="M5 .5 h25 v29 h-25 a4.5 4.5 0 0 1 -4.5 -4.5 v-20 a4.5 4.5 0 0 1 4.5 -4.5z" fill="#000" fill-opacity=".05"/><path d="M30 1v28" stroke="#000" stroke-opacity=".1" fill="none"/><g transform="translate(0,0)"><g fill="#fff"><path d="M9.300 8.200c1.800-1.900 4.300-3 6.900-3 1.500 0 2.900.400 4.200 1l-1.300 1.300-1.900-.300-.800 1.300 1.400.900-2.300 1.700-2.600-.400-1.400 1.800-2.100.500-.900-1.700 1.400-1.600z"/><path d="M21.400 6.800c2.300 1.700 3.800 4.400 3.800 7.400 0 .800-.100 1.500-.300 2.200l-1.500-2.300-1.200 1.200-1.300-2.500-2.400.600-2.500-.900 1.300-2.300 2.500-.900z"/><path d="M10.200 13.400l3.300-.900 2.600 1.100 2.300-.200 2 2.100-.600 2.900-2.200 2.500-.400 2.600-2.300 1.300-1.900-2.900.200-3-2.600-1.700-.900-2.200z"/><path d="M7.300 16.600l1.100 2.100-.500 1.500c-.500-.900-.800-1.900-1-2.900z" opacity=".9"/></g></g><text x="38" y="19.3" font-style="italic">http_get</text><rect class="p" x="-5" y="10" width="10" height="10" rx="3"/><rect class="p" x="115" y="10" width="10" height="10" rx="3"/></g>
<g transform="translate(720,345)"><rect width="180" height="30" rx="5" fill="#ffffff" stroke="#999"/><path d="M5 .5 h25 v29 h-25 a4.5 4.5 0 0 1 -4.5 -4.5 v-20 a4.5 4.5 0 0 1 4.5 -4.5z" fill="#000" fill-opacity=".05"/><path d="M30 1v28" stroke="#000" stroke-opacity=".1" fill="none"/><g transform="translate(0,0)"><path d="M9.500 18.500L6.900 23.200Q10.800 22.400 13.200 19.840A8.400 5.600 0 1 0 9.500 18.500z" fill="#fff" stroke="#b9b9b9" stroke-width=".9" stroke-linejoin="round"/></g><text x="38" y="19.3" font-style="italic">replace this method</text></g>
<g transform="translate(760,385)"><rect width="140" height="30" rx="5" fill="#a9bbd1" stroke="#999"/><path d="M5 .5 h25 v29 h-25 a4.5 4.5 0 0 1 -4.5 -4.5 v-20 a4.5 4.5 0 0 1 4.5 -4.5z" fill="#000" fill-opacity=".05"/><path d="M30 1v28" stroke="#000" stroke-opacity=".1" fill="none"/><g transform="translate(0,0)"><g fill="#fff"><path d="M9.300 8.200c1.800-1.900 4.300-3 6.900-3 1.500 0 2.900.400 4.200 1l-1.300 1.300-1.900-.300-.800 1.300 1.400.900-2.300 1.700-2.600-.400-1.400 1.800-2.100.500-.900-1.700 1.400-1.600z"/><path d="M21.400 6.800c2.300 1.700 3.800 4.400 3.800 7.400 0 .800-.100 1.500-.300 2.200l-1.500-2.300-1.200 1.200-1.300-2.500-2.400.600-2.500-.900 1.300-2.300 2.500-.900z"/><path d="M10.200 13.400l3.300-.900 2.600 1.100 2.300-.200 2 2.100-.600 2.900-2.200 2.500-.400 2.600-2.300 1.300-1.900-2.900.200-3-2.600-1.700-.900-2.200z"/><path d="M7.300 16.600l1.100 2.100-.500 1.500c-.500-.900-.800-1.900-1-2.900z" opacity=".9"/></g></g><text x="38" y="19.3">dns lookup</text><rect class="p" x="-5" y="10" width="10" height="10" rx="3"/><rect class="p" x="135" y="10" width="10" height="10" rx="3"/></g>
<g transform="translate(800,457.5)"><rect width="100" height="45" rx="5" fill="#d5977a" stroke="#999"/><path d="M5 .5 h25 v44 h-25 a4.5 4.5 0 0 1 -4.5 -4.5 v-35 a4.5 4.5 0 0 1 4.5 -4.5z" fill="#000" fill-opacity=".05"/><path d="M30 1v43" stroke="#000" stroke-opacity=".1" fill="none"/><g transform="translate(0,7.5)"><path d="M13.71 8.59L13.82 6.12L16.78 6.12L16.89 8.59L18.70 9.35L20.53 7.68L22.62 9.77L20.95 11.60L21.71 13.41L24.18 13.52L24.18 16.48L21.71 16.59L20.95 18.40L22.62 20.23L20.53 22.32L18.70 20.65L16.89 21.41L16.78 23.88L13.82 23.88L13.71 21.41L11.90 20.65L10.07 22.32L7.98 20.23L9.65 18.40L8.89 16.59L6.42 16.48L6.42 13.52L8.89 13.41L9.65 11.60L7.98 9.77L10.07 7.68L11.90 9.35zM10.90 15.00 a4.40 4.40 0 1 0 8.80 0 a4.40 4.40 0 1 0 -8.80 0z" fill="#fff" fill-rule="evenodd"/></g><text x="38" y="26.8" font-style="italic">Exec</text><rect class="p" x="-5" y="17.5" width="10" height="10" rx="3"/><rect class="p" x="95" y="4.5" width="10" height="10" rx="3"/><rect class="p" x="95" y="17.5" width="10" height="10" rx="3"/><rect class="p" x="95" y="30.5" width="10" height="10" rx="3"/></g>
<g transform="translate(760,545)"><rect width="160" height="30" rx="5" fill="#d3bfd8" stroke="#999"/><path d="M5 .5 h25 v29 h-25 a4.5 4.5 0 0 1 -4.5 -4.5 v-20 a4.5 4.5 0 0 1 4.5 -4.5z" fill="#000" fill-opacity=".05"/><path d="M30 1v28" stroke="#000" stroke-opacity=".1" fill="none"/><g transform="translate(0,0)"><g fill="none" stroke="#fff" stroke-linecap="butt"><path d="M10.90 11.70A9.38 9.38 0 0 1 10.90 18.30" stroke-width="1.5"/><path d="M12.90 7.50A16.53 16.53 0 0 1 12.90 22.50" stroke-width="1.5"/><path d="M15.60 3.30A20.35 20.35 0 0 1 15.60 26.70" stroke-width="1.6"/></g></g><text x="38" y="19.3">ha-nodered-test</text><rect class="p" x="155" y="10" width="10" height="10" rx="3"/><rect x="9.200" y="33.9" width="9" height="9" rx="2" fill="#6aa984" stroke="#6aa984" stroke-width="2.600"/><text class="st" x="23" y="43">connected</text></g>
<g transform="translate(760,605)"><rect width="160" height="30" rx="5" fill="#d3bfd8" stroke="#999"/><path d="M155 .5 h-25 v29 h25 a4.5 4.5 0 0 0 4.5 -4.5 v-20 a4.5 4.5 0 0 0 -4.5 -4.5z" fill="#000" fill-opacity=".05"/><path d="M130 1v28" stroke="#000" stroke-opacity=".1" fill="none"/><g transform="translate(130,0)"><g fill="none" stroke="#fff" stroke-linecap="butt"><path d="M10.90 11.70A9.38 9.38 0 0 1 10.90 18.30" stroke-width="1.5"/><path d="M12.90 7.50A16.53 16.53 0 0 1 12.90 22.50" stroke-width="1.5"/><path d="M15.60 3.30A20.35 20.35 0 0 1 15.60 26.70" stroke-width="1.6"/></g></g><text x="122" y="19.3" text-anchor="end">ha-nodered-test</text><rect class="p" x="-5" y="10" width="10" height="10" rx="3"/><rect x="9.200" y="33.9" width="9" height="9" rx="2" fill="#6aa984" stroke="#6aa984" stroke-width="2.600"/><text class="st" x="23" y="43">connected</text></g>
<g transform="translate(800,665)"><rect width="120" height="30" rx="5" fill="#e4e0f6" stroke="#999"/><path d="M5 .5 h25 v29 h-25 a4.5 4.5 0 0 1 -4.5 -4.5 v-20 a4.5 4.5 0 0 1 4.5 -4.5z" fill="#000" fill-opacity=".05"/><path d="M30 1v28" stroke="#000" stroke-opacity=".1" fill="none"/><g transform="translate(0,0)"><path d="M17.800 7.300A8.400 8.400 0 1 1 9.400 9.300" fill="none" stroke="#fff" stroke-width="1.400" stroke-linecap="round"/><circle cx="15.300" cy="15.300" r="1.500" fill="#fff"/><circle cx="15.200" cy="6.800" r="1.750" fill="#fff"/><path d="M14.100 16.200L9 8.700l7.300 5.600z" fill="#fff"/></g><text x="38" y="19.3">delay 35s</text><rect class="p" x="-5" y="10" width="10" height="10" rx="3"/><rect class="p" x="115" y="10" width="10" height="10" rx="3"/><rect x="9.200" y="33.9" width="9" height="9" rx="2" fill="#6f9ff0" stroke="#6f9ff0" stroke-width="2.600"/><text class="st" x="23" y="43">0</text></g>
<g transform="translate(800,724.18)"><rect width="120" height="30" rx="5" fill="#c0c0c0" stroke="#999"/><path d="M5 .5 h25 v29 h-25 a4.5 4.5 0 0 1 -4.5 -4.5 v-20 a4.5 4.5 0 0 1 4.5 -4.5z" fill="#000" fill-opacity=".05"/><path d="M30 1v28" stroke="#000" stroke-opacity=".1" fill="none"/><g transform="translate(0,0)"><g fill="none" stroke="#fff" stroke-linecap="butt"><path d="M10.90 11.70A9.38 9.38 0 0 1 10.90 18.30" stroke-width="1.5"/><path d="M12.90 7.50A16.53 16.53 0 0 1 12.90 22.50" stroke-width="1.5" stroke-dasharray="7.03 1.50"/><path d="M15.60 3.30A20.35 20.35 0 0 1 15.60 26.70" stroke-width="1.6" stroke-dasharray="7.31 1.50"/></g></g><text x="38" y="19.3" font-style="italic">tcp_node</text><rect class="p" x="-5" y="10" width="10" height="10" rx="3"/><rect class="p" x="115" y="10" width="10" height="10" rx="3"/></g>
<g transform="translate(780,784.18)"><rect width="140" height="30" rx="5" fill="#a9bbd1" stroke="#999"/><path d="M5 .5 h25 v29 h-25 a4.5 4.5 0 0 1 -4.5 -4.5 v-20 a4.5 4.5 0 0 1 4.5 -4.5z" fill="#000" fill-opacity=".05"/><path d="M30 1v28" stroke="#000" stroke-opacity=".1" fill="none"/><g transform="translate(0,0)"><g fill="#fff"><path d="M9.300 8.200c1.800-1.900 4.300-3 6.900-3 1.500 0 2.900.400 4.200 1l-1.300 1.300-1.900-.300-.800 1.300 1.400.900-2.300 1.700-2.600-.400-1.400 1.800-2.100.500-.900-1.700 1.400-1.600z"/><path d="M21.400 6.800c2.300 1.700 3.800 4.400 3.800 7.400 0 .800-.100 1.500-.300 2.200l-1.500-2.300-1.200 1.200-1.300-2.500-2.400.600-2.500-.900 1.300-2.300 2.500-.900z"/><path d="M10.200 13.400l3.300-.900 2.600 1.100 2.300-.200 2 2.100-.600 2.900-2.200 2.500-.400 2.600-2.300 1.300-1.900-2.900.200-3-2.600-1.700-.900-2.200z"/><path d="M7.300 16.600l1.100 2.100-.500 1.500c-.500-.900-.800-1.900-1-2.900z" opacity=".9"/></g></g><text x="38" y="19.3">mail-verify</text><rect class="p" x="-5" y="10" width="10" height="10" rx="3"/><rect class="p" x="135" y="10" width="10" height="10" rx="3"/><rect x="9.200" y="33.9" width="9" height="9" rx="2" fill="#6aa984" stroke="#6aa984" stroke-width="2.600"/><text class="st" x="23" y="43">Success !</text></g>
<g transform="translate(980,385)"><rect width="100" height="30" rx="5" fill="#e4e0f6" stroke="#999"/><path d="M5 .5 h25 v29 h-25 a4.5 4.5 0 0 1 -4.5 -4.5 v-20 a4.5 4.5 0 0 1 4.5 -4.5z" fill="#000" fill-opacity=".05"/><path d="M30 1v28" stroke="#000" stroke-opacity=".1" fill="none"/><g transform="translate(0,0)"><path d="M17.800 7.300A8.400 8.400 0 1 1 9.400 9.300" fill="none" stroke="#fff" stroke-width="1.400" stroke-linecap="round"/><circle cx="15.300" cy="15.300" r="1.500" fill="#fff"/><circle cx="15.200" cy="6.800" r="1.750" fill="#fff"/><path d="M14.100 16.200L9 8.700l7.300 5.600z" fill="#fff"/></g><text x="38" y="19.3" font-style="italic">Date</text><rect class="p" x="-5" y="10" width="10" height="10" rx="3"/><rect class="p" x="95" y="10" width="10" height="10" rx="3"/></g>
<g transform="translate(1120,385)"><rect width="180" height="30" rx="5" fill="#f1d0a2" stroke="#999"/><path d="M5 .5 h25 v29 h-25 a4.5 4.5 0 0 1 -4.5 -4.5 v-20 a4.5 4.5 0 0 1 4.5 -4.5z" fill="#000" fill-opacity=".05"/><path d="M30 1v28" stroke="#000" stroke-opacity=".1" fill="none"/><g transform="translate(0,0)"><g fill="none" stroke="#fff" stroke-linecap="round"><path d="M21.100 6.900C21.300 4.100 17.800 3.500 17.200 7.700L15.300 21.700C14.700 25.900 10.200 25.900 9.800 23.300" stroke-width="2.150"/><path d="M10.300 14.500H20.200" stroke-width="1.550" stroke-linecap="butt"/></g></g><text x="38" y="19.3" font-style="italic">validate response</text><rect class="p" x="-5" y="10" width="10" height="10" rx="3"/><rect class="p" x="175" y="3.5" width="10" height="10" rx="3"/><rect class="p" x="175" y="16.5" width="10" height="10" rx="3"/></g>
<g transform="translate(1020,605)"><rect width="140" height="30" rx="5" fill="#f1d0a2" stroke="#999"/><path d="M5 .5 h25 v29 h-25 a4.5 4.5 0 0 1 -4.5 -4.5 v-20 a4.5 4.5 0 0 1 4.5 -4.5z" fill="#000" fill-opacity=".05"/><path d="M30 1v28" stroke="#000" stroke-opacity=".1" fill="none"/><g transform="translate(0,0)"><g fill="none" stroke="#fff" stroke-linecap="round"><path d="M21.100 6.900C21.300 4.100 17.800 3.500 17.200 7.700L15.300 21.700C14.700 25.900 10.200 25.900 9.800 23.300" stroke-width="2.150"/><path d="M10.300 14.500H20.200" stroke-width="1.550" stroke-linecap="butt"/></g></g><text x="38" y="19.3" font-style="italic">wait_4_mqtt</text><rect class="p" x="-5" y="10" width="10" height="10" rx="3"/><rect class="p" x="135" y="10" width="10" height="10" rx="3"/></g>
<g transform="translate(1359.18,345)"><rect width="200" height="30" rx="5" fill="#f1d0a2" stroke="#999"/><path d="M5 .5 h25 v29 h-25 a4.5 4.5 0 0 1 -4.5 -4.5 v-20 a4.5 4.5 0 0 1 4.5 -4.5z" fill="#000" fill-opacity=".05"/><path d="M30 1v28" stroke="#000" stroke-opacity=".1" fill="none"/><g transform="translate(0,0)"><g fill="none" stroke="#fff" stroke-linecap="round"><path d="M21.100 6.900C21.300 4.100 17.800 3.500 17.200 7.700L15.300 21.700C14.700 25.900 10.200 25.900 9.800 23.300" stroke-width="2.150"/><path d="M10.300 14.500H20.200" stroke-width="1.550" stroke-linecap="butt"/></g></g><text x="38" y="19.3" font-style="italic">Pass - Keep checking</text><rect class="p" x="-5" y="10" width="10" height="10" rx="3"/><rect class="p" x="195" y="10" width="10" height="10" rx="3"/></g>
<g transform="translate(1359.18,425)"><rect width="180" height="30" rx="5" fill="#f1d0a2" stroke="#999"/><path d="M5 .5 h25 v29 h-25 a4.5 4.5 0 0 1 -4.5 -4.5 v-20 a4.5 4.5 0 0 1 4.5 -4.5z" fill="#000" fill-opacity=".05"/><path d="M30 1v28" stroke="#000" stroke-opacity=".1" fill="none"/><g transform="translate(0,0)"><g fill="none" stroke="#fff" stroke-linecap="round"><path d="M21.100 6.900C21.300 4.100 17.800 3.500 17.200 7.700L15.300 21.700C14.700 25.900 10.200 25.900 9.800 23.300" stroke-width="2.150"/><path d="M10.300 14.500H20.200" stroke-width="1.550" stroke-linecap="butt"/></g></g><text x="38" y="19.3" font-style="italic">Fail - Stop checking</text><rect class="p" x="-5" y="10" width="10" height="10" rx="3"/><rect class="p" x="175" y="3.5" width="10" height="10" rx="3"/><rect class="p" x="175" y="16.5" width="10" height="10" rx="3"/></g>
<g transform="translate(1619.18,425)"><rect width="120" height="30" rx="5" fill="#f1d0a2" stroke="#999"/><path d="M5 .5 h25 v29 h-25 a4.5 4.5 0 0 1 -4.5 -4.5 v-20 a4.5 4.5 0 0 1 4.5 -4.5z" fill="#000" fill-opacity=".05"/><path d="M30 1v28" stroke="#000" stroke-opacity=".1" fill="none"/><g transform="translate(0,0)"><g fill="none" stroke="#fff" stroke-linecap="round"><path d="M21.100 6.900C21.300 4.100 17.800 3.500 17.200 7.700L15.300 21.700C14.700 25.900 10.200 25.900 9.800 23.300" stroke-width="2.150"/><path d="M10.300 14.500H20.200" stroke-width="1.550" stroke-linecap="butt"/></g></g><text x="38" y="19.3" font-style="italic">fmt msg</text><rect class="p" x="-5" y="10" width="10" height="10" rx="3"/><rect class="p" x="115" y="10" width="10" height="10" rx="3"/></g>
<g transform="translate(1779.18,425)"><rect width="140" height="30" rx="5" fill="#7fbbf1" stroke="#999"/><path d="M135 .5 h-25 v29 h25 a4.5 4.5 0 0 0 4.5 -4.5 v-20 a4.5 4.5 0 0 0 -4.5 -4.5z" fill="#000" fill-opacity=".05"/><path d="M110 1v28" stroke="#000" stroke-opacity=".1" fill="none"/><g transform="translate(110,0)"><g fill="#fff"><path d="M6.500 17.800h15.500a1.500 1.500 0 0 1 1.500 1.500v4.200a1.500 1.500 0 0 1-1.500 1.500h-15.500a1.500 1.500 0 0 1-1.500-1.500v-4.200a1.500 1.500 0 0 1 1.500-1.500zM8 20.600v2h2v-2zM11.500 20.600v2h2v-2zM15 20.600v2h2v-2z" fill-rule="evenodd"/><path d="M18.300 11.500h2.200v6.500h-2.200z"/><circle cx="19.400" cy="11.300" r="1.500"/></g><g fill="none" stroke="#fff" stroke-width="1.400" stroke-linecap="round"><path d="M15.800 9.200a5 5 0 0 1 7.200 0"/><path d="M13.700 7a8 8 0 0 1 11.400 0"/></g></g><text x="102" y="19.3" text-anchor="end" font-style="italic">notify mobile</text><rect class="p" x="-5" y="10" width="10" height="10" rx="3"/><rect class="p" x="135" y="10" width="10" height="10" rx="3"/><rect x="9.200" y="33.9" width="9" height="9" rx="2" fill="#6aa984" stroke="#6aa984" stroke-width="2.600"/><text class="st" x="23" y="43">notify.mobile_app_redmi_note_10_pro called at: Oct 27, 12:52</text></g>
<g transform="translate(1619.18,485)"><rect width="220" height="30" rx="5" fill="#cce6c1" stroke="#dc8330" stroke-width="2"/><path d="M215 .5 h-25 v29 h25 a4.5 4.5 0 0 0 4.5 -4.5 v-20 a4.5 4.5 0 0 0 -4.5 -4.5z" fill="#000" fill-opacity=".05"/><path d="M190 1v28" stroke="#000" stroke-opacity=".1" fill="none"/><g transform="translate(190,0)"><path d="M5.900 7.300h18.500v15.800h-18.500z" fill="#fff"/><path d="M6.300 7.600l8.800 10 8.900-10" fill="none" stroke="#c6dbbd" stroke-width="1.100"/></g><text x="182" y="19.3" text-anchor="end" font-style="italic">gmail (via VIP 10.0.0.16)</text><rect class="p" x="-5" y="10" width="10" height="10" rx="3"/></g>
<g transform="translate(1340,125)"><rect width="199.18" height="30" rx="5" fill="#7fbbf1" stroke="#999"/><path d="M194.18 .5 h-25 v29 h25 a4.5 4.5 0 0 0 4.5 -4.5 v-20 a4.5 4.5 0 0 0 -4.5 -4.5z" fill="#000" fill-opacity=".05"/><path d="M169.18 1v28" stroke="#000" stroke-opacity=".1" fill="none"/><g transform="translate(169.18,0)"><g fill="none" stroke="#fff" stroke-width="1.600"><circle cx="9.700" cy="16.400" r="1.900"/><circle cx="20.500" cy="16.400" r="1.900"/><path d="M5.300 16.400h2.500M22.400 16.400h2.300M11.300 15.300l7-4.300" stroke-linecap="round"/></g></g><text x="161.18" y="19.3" text-anchor="end" font-style="italic">reset_check_services</text><rect class="p" x="-5" y="10" width="10" height="10" rx="3"/><rect class="p" x="194.18" y="3.5" width="10" height="10" rx="3"/><rect class="p" x="194.18" y="16.5" width="10" height="10" rx="3"/><rect x="9.200" y="33.9" width="9" height="9" rx="2" fill="#6aa984" stroke="#6aa984" stroke-width="2.600"/><text class="st" x="23" y="43">registered at: Oct 27, 09:42</text></g>
<g transform="translate(1399.18,185)"><rect x="-25" y="2" width="32" height="26" rx="5" fill="#eee" stroke="#999"/><rect x="-21" y="6" width="16" height="18" rx="4" fill="#a9bbd1" stroke="#999"/><rect width="140" height="30" rx="5" fill="#a9bbd1" stroke="#999"/><path d="M5 .5 h25 v29 h-25 a4.5 4.5 0 0 1 -4.5 -4.5 v-20 a4.5 4.5 0 0 1 4.5 -4.5z" fill="#000" fill-opacity=".05"/><path d="M30 1v28" stroke="#000" stroke-opacity=".1" fill="none"/><g transform="translate(0,0)"><path d="M8.400 8.100h6.200v5h-6.200zM8.400 17.400h6.200v5h-6.200zM14.200 2.700l6.800 12.300-6.800 12.300z" fill="#fff"/></g><text x="38" y="19.3" font-style="italic">wipe attributes</text><rect class="p" x="135" y="10" width="10" height="10" rx="3"/></g>
<g transform="translate(1619.18,145)"><rect width="140" height="30" rx="5" fill="#f1d0a2" stroke="#999"/><path d="M5 .5 h25 v29 h-25 a4.5 4.5 0 0 1 -4.5 -4.5 v-20 a4.5 4.5 0 0 1 4.5 -4.5z" fill="#000" fill-opacity=".05"/><path d="M30 1v28" stroke="#000" stroke-opacity=".1" fill="none"/><g transform="translate(0,0)"><g fill="none" stroke="#fff" stroke-linecap="round"><path d="M21.100 6.900C21.300 4.100 17.800 3.500 17.200 7.700L15.300 21.700C14.700 25.900 10.200 25.900 9.800 23.300" stroke-width="2.150"/><path d="M10.300 14.500H20.200" stroke-width="1.550" stroke-linecap="butt"/></g></g><text x="38" y="19.3" font-style="italic">Wipe Globals</text><rect class="p" x="-5" y="10" width="10" height="10" rx="3"/><rect class="p" x="135" y="10" width="10" height="10" rx="3"/></g>
<g transform="translate(1619.18,245)"><rect width="180" height="30" rx="5" fill="#f1d0a2" stroke="#999"/><path d="M5 .5 h25 v29 h-25 a4.5 4.5 0 0 1 -4.5 -4.5 v-20 a4.5 4.5 0 0 1 4.5 -4.5z" fill="#000" fill-opacity=".05"/><path d="M30 1v28" stroke="#000" stroke-opacity=".1" fill="none"/><g transform="translate(0,0)"><g fill="none" stroke="#fff" stroke-linecap="round"><path d="M21.100 6.900C21.300 4.100 17.800 3.500 17.200 7.700L15.300 21.700C14.700 25.900 10.200 25.900 9.800 23.300" stroke-width="2.150"/><path d="M10.300 14.500H20.200" stroke-width="1.550" stroke-linecap="butt"/></g></g><text x="38" y="19.3" font-style="italic">Update attributes</text><rect class="p" x="-5" y="10" width="10" height="10" rx="3"/><rect class="p" x="175" y="10" width="10" height="10" rx="3"/></g>
<g transform="translate(1839.18,185)"><rect width="140" height="30" rx="5" fill="#7fbbf1" stroke="#999"/><path d="M135 .5 h-25 v29 h25 a4.5 4.5 0 0 0 4.5 -4.5 v-20 a4.5 4.5 0 0 0 -4.5 -4.5z" fill="#000" fill-opacity=".05"/><path d="M110 1v28" stroke="#000" stroke-opacity=".1" fill="none"/><g transform="translate(110,0)"><circle cx="15" cy="15" r="5.900" fill="none" stroke="#fff" stroke-width="2"/></g><text x="102" y="19.3" text-anchor="end" font-style="italic">push states</text><rect class="p" x="-5" y="10" width="10" height="10" rx="3"/><rect class="p" x="135" y="10" width="10" height="10" rx="3"/><rect x="9.200" y="33.9" width="9" height="9" rx="2" fill="#6aa984" stroke="#6aa984" stroke-width="2.600"/><text class="st" x="23" y="43">true at: Oct 27, 22:38</text></g>
<g transform="translate(80,685)"><rect x="-25" y="2" width="32" height="26" rx="5" fill="#eee" stroke="#999"/><rect x="-21" y="6" width="16" height="18" rx="4" fill="#a9bbd1" stroke="#999"/><rect width="100" height="30" rx="5" fill="#a9bbd1" stroke="#999"/><path d="M5 .5 h25 v29 h-25 a4.5 4.5 0 0 1 -4.5 -4.5 v-20 a4.5 4.5 0 0 1 4.5 -4.5z" fill="#000" fill-opacity=".05"/><path d="M30 1v28" stroke="#000" stroke-opacity=".1" fill="none"/><g transform="translate(0,0)"><path d="M8.400 8.100h6.200v5h-6.200zM8.400 17.400h6.200v5h-6.200zM14.200 2.700l6.800 12.300-6.800 12.300z" fill="#fff"/></g><text x="38" y="19.3" font-style="italic">trigger</text><rect class="p" x="95" y="10" width="10" height="10" rx="3"/></g>
<g transform="translate(220,685)"><rect width="140" height="30" rx="5" fill="#7fbbf1" stroke="#999"/><path d="M5 .5 h25 v29 h-25 a4.5 4.5 0 0 1 -4.5 -4.5 v-20 a4.5 4.5 0 0 1 4.5 -4.5z" fill="#000" fill-opacity=".05"/><path d="M30 1v28" stroke="#000" stroke-opacity=".1" fill="none"/><g transform="translate(0,0)"><circle cx="15" cy="15" r="8.300" fill="none" stroke="#fff" stroke-width="1.900"/><path d="M13.600 9.600h2.700v2.500h-2.700zM12.900 13.500h3.600v5.300h1.100v1.700h-4.900v-1.700h1.200v-3.600h-1z" fill="#fff"/></g><text x="38" y="19.3" font-style="italic">read states</text><rect class="p" x="-5" y="10" width="10" height="10" rx="3"/><rect class="p" x="135" y="10" width="10" height="10" rx="3"/></g>
<g transform="translate(700,884.18)"><rect width="100" height="30" rx="5" fill="#f1d0a2" stroke="#999"/><path d="M5 .5 h25 v29 h-25 a4.5 4.5 0 0 1 -4.5 -4.5 v-20 a4.5 4.5 0 0 1 4.5 -4.5z" fill="#000" fill-opacity=".05"/><path d="M30 1v28" stroke="#000" stroke-opacity=".1" fill="none"/><g transform="translate(0,0)"><g fill="none" stroke="#fff" stroke-linecap="round"><path d="M21.100 6.900C21.300 4.100 17.800 3.500 17.200 7.700L15.300 21.700C14.700 25.900 10.200 25.900 9.800 23.300" stroke-width="2.150"/><path d="M10.300 14.500H20.200" stroke-width="1.550" stroke-linecap="butt"/></g></g><text x="38" y="19.3" font-style="italic">test</text><rect class="p" x="-5" y="10" width="10" height="10" rx="3"/><rect class="p" x="95" y="10" width="10" height="10" rx="3"/></g>
<g transform="translate(900,884.18)"><rect x="93" y="2" width="32" height="26" rx="5" fill="#eee" stroke="#999"/><rect x="105" y="6" width="16" height="18" rx="4" fill="#8fa883" stroke="#999"/><rect width="100" height="30" rx="5" fill="#8fa883" stroke="#999"/><path d="M95 .5 h-25 v29 h25 a4.5 4.5 0 0 0 4.5 -4.5 v-20 a4.5 4.5 0 0 0 -4.5 -4.5z" fill="#000" fill-opacity=".05"/><path d="M70 1v28" stroke="#000" stroke-opacity=".1" fill="none"/><g transform="translate(70,0)"><path d="M10 6.850h10.600v1.700h-10.600zM10 10.850h10.600v1.700h-10.600zM10 14.900h10.600v1.700h-10.600zM10 18.950h10.600v1.700h-10.600zM10 22.950h10.600v1.700h-10.600z" fill="#fff"/></g><text x="62" y="19.3" text-anchor="end">msg</text><rect class="p" x="-5" y="10" width="10" height="10" rx="3"/></g>
<g transform="translate(420,944.18)"><rect width="180" height="30" rx="5" fill="#ffffff" stroke="#999"/><path d="M5 .5 h25 v29 h-25 a4.5 4.5 0 0 1 -4.5 -4.5 v-20 a4.5 4.5 0 0 1 4.5 -4.5z" fill="#000" fill-opacity=".05"/><path d="M30 1v28" stroke="#000" stroke-opacity=".1" fill="none"/><g transform="translate(0,0)"><path d="M9.500 18.500L6.900 23.200Q10.800 22.400 13.200 19.840A8.400 5.600 0 1 0 9.500 18.500z" fill="#fff" stroke="#b9b9b9" stroke-width=".9" stroke-linejoin="round"/></g><text x="38" y="19.3" font-style="italic">switches / ISP router</text></g>
<g transform="translate(240,1004.18)"><rect x="-25" y="2" width="32" height="26" rx="5" fill="#eee" stroke="#999"/><rect x="-21" y="6" width="16" height="18" rx="4" fill="#a9bbd1" stroke="#999"/><rect width="100" height="30" rx="5" fill="#a9bbd1" stroke="#999"/><path d="M5 .5 h25 v29 h-25 a4.5 4.5 0 0 1 -4.5 -4.5 v-20 a4.5 4.5 0 0 1 4.5 -4.5z" fill="#000" fill-opacity=".05"/><path d="M30 1v28" stroke="#000" stroke-opacity=".1" fill="none"/><g transform="translate(0,0)"><path d="M8.400 8.100h6.200v5h-6.200zM8.400 17.400h6.200v5h-6.200zM14.200 2.700l6.800 12.300-6.800 12.300z" fill="#fff"/></g><text x="38" y="19.3" font-style="italic">trigger</text><rect class="p" x="95" y="10" width="10" height="10" rx="3"/></g>
<g transform="translate(420,1004.18)"><rect width="120" height="30" rx="5" fill="#f1d0a2" stroke="#999"/><path d="M5 .5 h25 v29 h-25 a4.5 4.5 0 0 1 -4.5 -4.5 v-20 a4.5 4.5 0 0 1 4.5 -4.5z" fill="#000" fill-opacity=".05"/><path d="M30 1v28" stroke="#000" stroke-opacity=".1" fill="none"/><g transform="translate(0,0)"><g fill="none" stroke="#fff" stroke-linecap="round"><path d="M21.100 6.900C21.300 4.100 17.800 3.500 17.200 7.700L15.300 21.700C14.700 25.900 10.200 25.900 9.800 23.300" stroke-width="2.150"/><path d="M10.300 14.500H20.200" stroke-width="1.550" stroke-linecap="butt"/></g></g><text x="38" y="19.3" font-style="italic">ping test</text><rect class="p" x="-5" y="10" width="10" height="10" rx="3"/><rect class="p" x="115" y="10" width="10" height="10" rx="3"/></g>
<g transform="translate(580,1004.18)"><rect width="100" height="30" rx="5" fill="#f8f0c4" stroke="#999"/><path d="M5 .5 h25 v29 h-25 a4.5 4.5 0 0 1 -4.5 -4.5 v-20 a4.5 4.5 0 0 1 4.5 -4.5z" fill="#000" fill-opacity=".05"/><path d="M30 1v28" stroke="#000" stroke-opacity=".1" fill="none"/><g transform="translate(0,0)"><path d="M11.700 4.600h6.700l-1.100 14.200h-4.500zM12.400 21.300h5.400v4.700h-5.400z" fill="#fff"/></g><text x="38" y="19.3">ping</text><rect class="p" x="-5" y="10" width="10" height="10" rx="3"/><rect class="p" x="95" y="10" width="10" height="10" rx="3"/></g>
</g></g></svg>
<div id="hdr"><svg width="100" height="40" viewBox="0 0 100 40" style="position:absolute;left:24px;top:14px"><path d="M30 20C39 20 39 11 51 11" fill="none" stroke="#cfcccc" stroke-width="3"/><path d="M30 20C46 20 46 30.500 66 30.500" fill="none" stroke="#cfcccc" stroke-width="3"/><rect x="8" y="14.600" width="22.600" height="11" rx="3.500" fill="#943636" stroke="#e2d2d2" stroke-width="1.700"/><rect x="51" y="5.700" width="22.600" height="11" rx="3.500" fill="#943636" stroke="#e2d2d2" stroke-width="1.700"/><rect x="65.500" y="25.300" width="22.600" height="11" rx="3.500" fill="#943636" stroke="#e2d2d2" stroke-width="1.700"/></svg><span>Node-RED</span></div>
<div id="pal">
<div id="psearch"><svg width="24" height="24" viewBox="0 0 24 24" style="position:absolute;left:14px;top:20px"><circle cx="10" cy="9.500" r="5.500" fill="none" stroke="#8f8f8f" stroke-width="2.300"/><path d="M14.200 13.700l4.500 4.500" stroke="#8f8f8f" stroke-width="3" stroke-linecap="round"/></svg><span>filter nodes</span></div>
<div id="pcat"><svg width="18" height="12" viewBox="0 0 18 12" style="position:absolute;left:17px;top:26px"><path d="M2 2l7 7 7-7" fill="none" stroke="#444" stroke-width="2.3"/></svg><span>home assistant</span></div>
<div class="pn" style="top:161px;height:51px;background:#7fbbf1">
<div class="pi" style="left:0;border-right:1px solid rgba(0,0,0,.06);border-radius:7px 0 0 7px"><svg width="42" height="42" viewBox="0 0 30 30"><path d="M26 3.800L3.800 15.600l6.300 2.800zM26 3.800l-15.900 14.600.3 6.700 3.900-4.500 6.300 3z" fill="none" stroke="#fff" stroke-width="2.100" stroke-linejoin="round"/><path d="M10.100 18.400l.3 6.700 3.900-4.500z" fill="#fff"/></svg></div>
<div class="pl" style="margin-left:56px">API</div>
<div class="pp" style="left:-8px;top:16.75px"></div>
<div class="pp" style="right:-9.500px;top:16.75px"></div>
</div>
<div class="pn" style="top:231px;height:51px;background:#7fbbf1">
<div class="pi" style="right:0;border-left:1px solid rgba(0,0,0,.06);border-radius:0 7px 7px 0"><svg width="42" height="42" viewBox="0 0 30 30"><g fill="#fff"><path d="M6.500 17.800h15.500a1.500 1.500 0 0 1 1.500 1.500v4.200a1.500 1.500 0 0 1-1.500 1.500h-15.500a1.500 1.500 0 0 1-1.500-1.500v-4.200a1.500 1.500 0 0 1 1.500-1.500zM8 20.600v2h2v-2zM11.500 20.600v2h2v-2zM15 20.600v2h2v-2z" fill-rule="evenodd"/><path d="M18.300 11.500h2.200v6.500h-2.200z"/><circle cx="19.400" cy="11.300" r="1.500"/></g><g fill="none" stroke="#fff" stroke-width="1.400" stroke-linecap="round"><path d="M15.800 9.200a5 5 0 0 1 7.200 0"/><path d="M13.700 7a8 8 0 0 1 11.400 0"/></g></svg></div>
<div class="pl" style="margin-right:56px">call service</div>
<div class="pp" style="left:-8px;top:16.75px"></div>
<div class="pp" style="right:-9.500px;top:16.75px"></div>
</div>
<div class="pn" style="top:301px;height:51px;background:#7fbbf1">
<div class="pi" style="left:0;border-right:1px solid rgba(0,0,0,.06);border-radius:7px 0 0 7px"><svg width="42" height="42" viewBox="0 0 30 30"><circle cx="15" cy="15" r="10.300" fill="none" stroke="#fff" stroke-width="2.300"/><path d="M13.300 8.300h3.300v3h-3.300zM12.400 13h4.400v6.600h1.400v2.100h-6v-2.100h1.500v-4.500h-1.300z" fill="#fff"/></svg></div>
<div class="pl" style="margin-left:56px">current state</div>
<div class="pp" style="left:-8px;top:16.75px"></div>
<div class="pp" style="right:-9.500px;top:16.75px"></div>
</div>
<div class="pn" style="top:371px;height:51px;background:#d08fb9">
<div class="pi" style="left:0;border-right:1px solid rgba(0,0,0,.06);border-radius:7px 0 0 7px"><svg width="42" height="42" viewBox="0 0 30 30"><path d="M13.900 3.700L25.400 8.600V20.200L13.900 26.100 2.500 20.200V8.600zM13.900 5.900L21.700 9.200 13.900 12.300 6.200 9.200zM15.400 14.100L23.100 11V19L15.400 22.900z" fill="#fff" fill-rule="evenodd" stroke="#fff" stroke-width=".8" stroke-linejoin="round"/></svg></div>
<div class="pl" style="margin-left:56px">device</div>
<div class="pp" style="right:-9.500px;top:16.75px"></div>
</div>
<div class="pn" style="top:441px;height:51px;background:#7fbbf1">
<div class="pi" style="right:0;border-left:1px solid rgba(0,0,0,.06);border-radius:0 7px 7px 0"><svg width="42" height="42" viewBox="0 0 30 30"><circle cx="13.700" cy="15" r="6.800" fill="none" stroke="#fff" stroke-width="2.300"/></svg></div>
<div class="pl" style="margin-right:56px">entity</div>
<div class="pp" style="left:-8px;top:16.75px"></div>
<div class="pp" style="right:-9.500px;top:16.75px"></div>
</div>
<div class="pn" style="top:511px;height:51px;background:#7fbbf1">
<div class="pi" style="left:0;border-right:1px solid rgba(0,0,0,.06);border-radius:7px 0 0 7px"><svg width="42" height="42" viewBox="0 0 30 30"><path d="M6.500 11.300h8.700v-5.300l9.300 9-9.300 9v-5.300h-8.700z" fill="#fff"/></svg></div>
<div class="pl" style="margin-left:56px">events: all</div>
<div class="pp" style="right:-9.500px;top:16.75px"></div>
</div>
<div class="pn" style="top:581px;height:51px;background:#7fbbf1">
<div class="pi" style="left:0;border-right:1px solid rgba(0,0,0,.06);border-radius:7px 0 0 7px"><svg width="42" height="42" viewBox="0 0 30 30"><path d="M15 4l9.500 5.500v11l-9.500 5.500-9.500-5.500v-11z" fill="none" stroke="#fff" stroke-width="2.400" stroke-linejoin="round"/><path d="M10.500 13.200h4.300v-3l5 4.800-5 4.800v-3h-4.300z" fill="#fff"/></svg></div>
<div class="pl" style="margin-left:56px">events: state</div>
<div class="pp" style="right:-9.500px;top:16.75px"></div>
</div>
<div class="pn" style="top:651px;height:51px;background:#7fbbf1">
<div class="pi" style="right:0;border-left:1px solid rgba(0,0,0,.06);border-radius:0 7px 7px 0"><svg width="42" height="42" viewBox="0 0 30 30"><circle cx="15" cy="9.800" r="1.900" fill="#fff"/><path d="M13.900 12.500h2.200l4 12.500h-2.600l-.7-2.400h-3.600l-.7 2.400h-2.600zM13.800 20.500h2.400l-1.200-4.200z" fill="#fff" fill-rule="evenodd"/><g fill="none" stroke="#fff" stroke-width="1.500" stroke-linecap="round"><path d="M11.300 6.500a4.800 4.800 0 0 0 0 6.600M18.700 6.500a4.800 4.800 0 0 1 0 6.600M8.700 4.500a8 8 0 0 0 0 10.600M21.300 4.500a8 8 0 0 1 0 10.600"/></g></svg></div>
<div class="pl" style="margin-right:56px">fire event</div>
<div class="pp" style="left:-8px;top:16.75px"></div>
<div class="pp" style="right:-9.500px;top:16.75px"></div>
</div>
<div class="pn" style="top:721px;height:51px;background:#7fbbf1">
<div class="pi" style="left:0;border-right:1px solid rgba(0,0,0,.06);border-radius:7px 0 0 7px"><svg width="42" height="42" viewBox="0 0 30 30"><path d="M19 5.200H24.700V25.600H14.500" fill="none" stroke="#fff" stroke-width="2.600"/><path d="M19.600 4L11.500 11.800v2.500h2.600v-1.500l6-5.800z" fill="#fff"/><path d="M19.800 5v7h-7z" fill="#fff"/><circle cx="11.100" cy="18.600" r="3.300" fill="none" stroke="#fff" stroke-width="2.300"/><path d="M8.600 21.300l-3.200 3.300" stroke="#fff" stroke-width="2.800" stroke-linecap="round"/></svg></div>
<div class="pl" style="margin-left:56px">get entities</div>
<div class="pp" style="left:-8px;top:16.75px"></div>
<div class="pp" style="right:-9.500px;top:16.75px"></div>
</div>
<div class="pn" style="top:791px;height:51px;background:#7fbbf1">
<div class="pi" style="left:0;border-right:1px solid rgba(0,0,0,.06);border-radius:7px 0 0 7px"><svg width="42" height="42" viewBox="0 0 30 30"><path d="M8 9.500a9.300 9.300 0 1 1 7.800 15.300" fill="none" stroke="#fff" stroke-width="2.300"/><path d="M3.300 7.300l7 .4-3.300 5.800z" fill="#fff"/><path d="M15.800 9v7h5.500" fill="none" stroke="#fff" stroke-width="2.300"/></svg></div>
<div class="pl" style="margin-left:56px">get history</div>
<div class="pp" style="left:-8px;top:16.75px"></div>
<div class="pp" style="right:-9.500px;top:16.75px"></div>
</div>
<div class="pn" style="top:861px;height:51px;background:#7fbbf1">
<div class="pi" style="left:0;border-right:1px solid rgba(0,0,0,.06);border-radius:7px 0 0 7px"><svg width="42" height="42" viewBox="0 0 30 30"><path d="M8.800 10a9 9 0 1 0 12.400 0" fill="none" stroke="#fff" stroke-width="2.400" stroke-linecap="round"/><circle cx="15" cy="4.600" r="2" fill="#fff"/><path d="M10.200 10l5.600 6.300" stroke="#fff" stroke-width="2.800" stroke-linecap="round"/></svg></div>
<div class="pl" style="margin-left:56px">poll state</div>
<div class="pp" style="right:-9.500px;top:16.75px"></div>
</div>
<div class="pn" style="top:931px;height:85px;background:#7fbbf1">
<div class="pi" style="left:0;border-right:1px solid rgba(0,0,0,.06);border-radius:7px 0 0 7px"><svg width="42" height="42" viewBox="0 0 30 30"><g fill="none" stroke="#fff" stroke-width="2.300"><path d="M8.700 5.500h-1.200a2.300 2.300 0 0 0-2.300 2.300v4.400a2.800 2.800 0 0 1-2.600 2.800 2.800 2.800 0 0 1 2.600 2.800v4.400a2.300 2.300 0 0 0 2.300 2.300h1.200"/><path d="M21.300 5.500h1.200a2.300 2.300 0 0 1 2.300 2.300v4.400a2.800 2.800 0 0 0 2.600 2.800 2.800 2.800 0 0 0-2.600 2.800v4.400a2.300 2.300 0 0 1-2.300 2.300h-1.200"/></g><path d="M9.300 19h2.200v2.300h-2.200zM13.900 19h2.200v2.300h-2.200zM18.500 19h2.200v2.300h-2.200z" fill="#fff"/></svg></div>
<div class="pl" style="margin-left:56px">render<br>template</div>
<div class="pp" style="left:-8px;top:33.75px"></div>
<div class="pp" style="right:-9.500px;top:33.75px"></div>
</div>
<div class="pn" style="top:1035px;height:51px;background:#7fbbf1">
<div class="pi" style="left:0;border-right:1px solid rgba(0,0,0,.06);border-radius:7px 0 0 7px"><svg width="42" height="42" viewBox="0 0 30 30"><path d="M6.200 4.600h7.400l11.600 11.600a1.400 1.400 0 0 1 0 2l-5.600 5.600a1.400 1.400 0 0 1-2 0l-11.600-11.600v-7.400a1.200 1.200 0 0 1 1.200-1.200zM9.100 6.500a1.650 1.650 0 1 0 .01 0z" fill="#fff" fill-rule="evenodd"/></svg></div>
<div class="pl" style="margin-left:56px">tag</div>
<div class="pp" style="right:-9.500px;top:16.75px"></div>
</div>
<div class="pn" style="top:1105px;height:51px;background:#7fbbf1">
<div class="pi" style="left:0;border-right:1px solid rgba(0,0,0,.06);border-radius:7px 0 0 7px"><svg width="42" height="42" viewBox="0 0 30 30"><circle cx="14.800" cy="14" r="8.900" fill="none" stroke="#fff" stroke-width="3.200"/><path d="M15.700 9.300v6h-5" fill="none" stroke="#fff" stroke-width="2.300"/></svg></div>
<div class="pl" style="margin-left:56px">time</div>
<div class="pp" style="right:-9.500px;top:16.75px"></div>
</div>
<div class="pn" style="top:1175px;height:51px;background:#7fbbf1">
<div class="pi" style="left:0;border-right:1px solid rgba(0,0,0,.06);border-radius:7px 0 0 7px"><svg width="42" height="42" viewBox="0 0 30 30"><path d="M12.600 2.800a.8.800 0 0 1 .8-.8h2.600a.8.800 0 0 1 .8.800v22.200a.8.800 0 0 1-.8.800h-2.600a.8.800 0 0 1-.8-.8z" fill="#fff"/><path d="M4.400 4h19.600l2.800 2.350-2.800 2.350h-19.600zM25.600 12.200h-19.600l-2.800 2.350 2.800 2.350h19.600z" fill="#fff"/></svg></div>
<div class="pl" style="margin-left:56px">trigger: state</div>
<div class="pp" style="right:-9.500px;top:16.75px"></div>
</div>
<div class="pn" style="top:1245px;height:51px;background:#7fbbf1">
<div class="pi" style="left:0;border-right:1px solid rgba(0,0,0,.06);border-radius:7px 0 0 7px"><svg width="42" height="42" viewBox="0 0 30 30"><circle cx="15" cy="15" r="10.500" fill="none" stroke="#fff" stroke-width="1.700"/><path d="M11.600 10.300h2.200v9.400h-2.200zM16.200 10.300h2.200v9.400h-2.200z" fill="#fff"/></svg></div>
<div class="pl" style="margin-left:56px">wait until</div>
<div class="pp" style="left:-8px;top:16.75px"></div>
<div class="pp" style="right:-9.500px;top:16.75px"></div>
</div>
<div class="pn" style="top:1315px;height:51px;background:#7fbbf1">
<div class="pi" style="left:0;border-right:1px solid rgba(0,0,0,.06);border-radius:7px 0 0 7px"><svg width="42" height="42" viewBox="0 0 30 30"><g fill="none" stroke="#fff" stroke-width="2.100" stroke-linecap="round"><path d="M12.300 12.200a3.800 3.800 0 1 1 6.400-.6"/><path d="M11.900 21.500a3.800 3.800 0 1 1-4.800-5.300"/><path d="M22.700 16.300a3.800 3.800 0 1 1-4.300 5.800"/><path d="M15.300 9.300L9 19.300M15.300 9.300L19.700 16.500M12.500 19.800H21.200" stroke-width="1.900"/></g><circle cx="15.300" cy="9.300" r="1.800" fill="#fff"/><circle cx="8.400" cy="19.800" r="1.800" fill="#fff"/><circle cx="21.200" cy="19.800" r="1.800" fill="#fff"/></svg></div>
<div class="pl" style="margin-left:56px">webhook</div>
<div class="pp" style="right:-9.500px;top:16.75px"></div>
</div>
<div class="pn" style="top:1385px;height:51px;background:#7fbbf1">
<div class="pi" style="left:0;border-right:1px solid rgba(0,0,0,.06);border-radius:7px 0 0 7px"><svg width="42" height="42" viewBox="0 0 30 30"><path d="M15 4a7 7 0 0 1 7 7c0 5-7 13-7 13s-7-8-7-13a7 7 0 0 1 7-7z" fill="none" stroke="#fff" stroke-width="2.300"/></svg></div>
<div class="pl" style="margin-left:56px">zone</div>
<div class="pp" style="right:-9.500px;top:16.75px"></div>
</div>
<div id="sb"><div id="sbt"></div><svg width="26" height="26" viewBox="0 0 26 26" style="position:absolute;left:0;top:0"><path d="M7 19h12l-6-7z" fill="#a3a3a3"/></svg></div>
</div>
<div id="tabs">
<div class="tab " style="left:42.3px">Globals + Hive</div>
<div class="tab act" style="left:402.8px">Check External Services</div>
<div class="tab " style="left:763.3px">Check HA Objects</div>
<div class="tab " style="left:1123.8px">Automations</div>
<div class="tab hov" style="left:1484.3px;width:345.300px"><span>MCEC Salah / Prime Cache</span><div class="fade"></div><svg width="25" height="18.300" viewBox="0 0 30 22" style="position:absolute;right:8px;top:17px"><path d="M1.5 11C5 4.5 10 2 15 2s10 2.500 13.500 9C25 17.500 20 20 15 20S5 17.500 1.500 11z" fill="none" stroke="#8a8a8a" stroke-width="2.6"/><circle cx="15" cy="10.500" r="5.600" fill="#8a8a8a"/><circle cx="13" cy="8.500" r="1.700" fill="#e8e8e8"/></svg></div>
<div class="tab dis" style="left:1843.8px"><svg width="24" height="24" viewBox="0 0 24 24" style="position:absolute;left:17px;top:13px"><circle cx="12" cy="12" r="8.6" fill="none" stroke="#c0c0c0" stroke-width="3"/><path d="M6 18L18 6" stroke="#c0c0c0" stroke-width="3"/></svg><span style="margin-left:26px">Test</span></div>
</div>
</body></html>
